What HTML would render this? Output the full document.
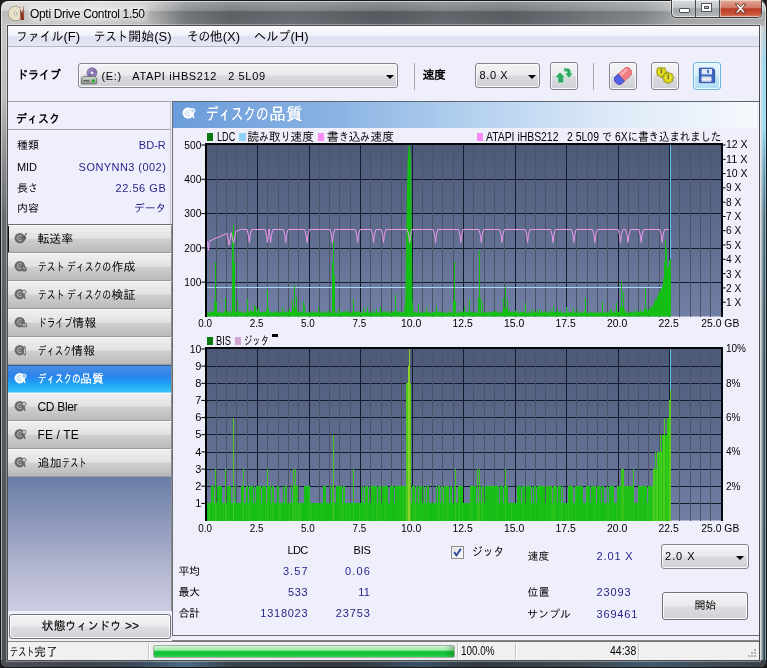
<!DOCTYPE html>
<html lang="ja"><head><meta charset="utf-8"><title>Opti Drive Control 1.50</title>
<style>
html,body{margin:0;padding:0}
body{width:767px;height:668px;overflow:hidden;position:relative;background:#1c1c1c;font-family:"Liberation Sans","IPAGothic",sans-serif;font-size:12px;color:#000}
.abs{position:absolute}
.t{position:absolute;white-space:nowrap;color:#000}
.t.b{font-weight:bold}
.kw{display:inline-block;white-space:nowrap;vertical-align:top}
.kw>span{display:inline-block;transform-origin:0 50%}
.t.v{color:#26268a}
.t.white{color:#fff;text-shadow:0 0 .7px rgba(255,255,255,.8)}
.t.title{text-shadow:0 0 5px #fff,0 0 5px #fff,0 0 8px #fff,0 0 10px #fff}
#frame{left:0;top:0;width:767px;height:668px;box-sizing:border-box;border:1px solid #16181a;border-radius:8px 8px 7px 7px;
background:
 linear-gradient(to bottom,rgba(255,255,255,.30) 0,rgba(255,255,255,.16) 9px,rgba(0,0,0,.10) 11px,rgba(0,0,0,.04) 25px,rgba(0,0,0,0) 26px) 0 0/100% 26px no-repeat,
 linear-gradient(90deg,#cfcfcf 0,#d6d6d6 12%,#c4c4c4 19%,#7e8286 24%,#666a70 30%,#70747a 38%,#5e6268 50%,#6c7076 58%,#62666c 66%,#74787e 74%,#8e9296 84%,#aeb0b2 88%,#b8babc 100%) 0 0/100% 26px no-repeat,
 linear-gradient(to bottom,#c0c0c0 0,#a8aaac 60px,#7c8084 160px,#5c6268 340px,#474d53 100%);
box-shadow:inset 0 0 0 1px rgba(255,255,255,.55)}
#client{left:8px;top:26px;width:751px;height:634px;background:#efeffb;box-shadow:0 0 0 1px #4a4c50,0 0 0 2px rgba(255,255,255,.35)}
#menu{left:8px;top:26px;width:751px;height:20px;background:linear-gradient(#fdfdff,#f1f1fb 45%,#dfe1f1 55%,#e4e6f4);border-bottom:1px solid #b6b8c8}
#tbline{left:8px;top:101px;width:163px;height:1px;background:#a4a4ac}
.combo{position:absolute;border:1px solid #85858f;border-radius:3px;background:linear-gradient(#f4f4f6,#eaeaee 48%,#dadae0 52%,#cfcfd7);box-sizing:border-box;box-shadow:inset 0 0 0 1px #fafafc}
.arr{position:absolute;width:0;height:0;border-left:4px solid transparent;border-right:4px solid transparent;border-top:4px solid #000}
.tbtn{position:absolute;top:62px;width:28px;height:28px;box-sizing:border-box;border:1px solid #85858f;border-radius:3px;background:linear-gradient(#f4f4f6,#eaeaee 48%,#dadae0 52%,#cfcfd7);box-shadow:inset 0 0 0 1px #fafafc}
.tbtn.hot{border-color:#6cb4e2;background:linear-gradient(#e6f5fd,#d4edfa 48%,#bfe4f8 52%,#b4def4);box-shadow:inset 0 0 0 1px #eefaff}
.tbtn svg{position:absolute;left:4px;top:4px}
.sep{position:absolute;top:63px;width:1px;height:27px;background:#a8a8b0}
.nav{position:absolute;left:8px;width:163px;height:26px;border-top:1px solid #f8f8f8;border-bottom:1px solid #9a9a9a;border-right:1px solid #8a8a8a;background:linear-gradient(#efefef,#e2e2e2 46%,#cfcfcf 52%,#b9b9b9)}
.nav .ico{position:absolute;left:6px;top:6.4px}
.nav.sel{border-top-color:#2c5ca8;border-bottom-color:#8adcfa;background:linear-gradient(#4a8ee2,#2a84ec 40%,#1f9ff4 65%,#38c2fa)}
#lgrad{left:8px;top:477px;width:163px;height:134px;background:linear-gradient(#6a7da6,#8f9abc 35%,#b4b7d1 70%,#cdcde2);border-right:1px solid #8a8a8a}
#lborder{left:8px;top:224px;width:164px;height:1px;background:#6e6e6e}
#lsep{left:8px;top:129px;width:162px;height:1px;background:#a4a4ac}
#lright{left:170px;top:102px;width:1px;height:122px;background:#c8c8d0}
.btn{position:absolute;box-sizing:border-box;border:1px solid #707078;border-radius:3px;background:linear-gradient(#f4f4f6,#ebebee 48%,#dddde2 52%,#d0d0d6);box-shadow:inset 0 0 0 1px #fcfcfc}
#rpanel{left:172px;top:101px;width:587px;height:535px;border:1px solid #6c6c76;border-right:none;border-top-color:#5c6470;box-sizing:border-box;background:#efeffb}
#rhdr{left:173px;top:102px;width:584px;height:26px;background:linear-gradient(90deg,#6b9ddb 0,#86b0e2 25%,#b2cfee 50%,#dde9f8 75%,#f6f9fd 100%)}
#status{left:8px;top:641px;width:751px;height:19px;background:#f0f0f0;border-top:1px solid #fbfbfb;box-sizing:border-box}
#stline{left:172px;top:640px;width:587px;height:2px;background:linear-gradient(#8c8c8c,#6e6e6e)}
.sdiv{position:absolute;top:643px;width:1px;height:16px;background:#c4c4c4;box-shadow:1px 0 0 #fff}
#prog{left:153px;top:645px;width:302px;height:13px;box-sizing:border-box;border:1px solid #a8aca8;border-radius:2px;background:linear-gradient(90deg,rgba(0,0,0,0) 0,rgba(0,0,0,0) 97%,rgba(0,60,0,.28) 100%),linear-gradient(#d0f6d4,#a4eeb0 30%,#78e48c 42%,#1cc63e 50%,#14c238 75%,#34d452 100%)}
.lgsq{position:absolute;width:6.3px;height:7.8px}
#chk{left:451px;top:546px;width:13px;height:13px;box-sizing:border-box;border:1px solid #8e8f8f;background:linear-gradient(135deg,#dcdcdc,#fff);box-shadow:inset 0 0 0 1px #f4f4f4}
</style></head><body>
<div id="frame" class="abs"></div>
<div class="abs" style="left:1px;top:660px;width:765px;height:7px;border-radius:0 0 6px 6px;background:linear-gradient(90deg,#4a5056 0,#3c4248 10%,#3a4a5a 18%,#4e6c84 24%,#38424c 30%,#34383e 45%,#3a5064 55%,#32383e 62%,#3c4852 75%,#42586a 85%,#3a4046 100%)"></div>
<div class="abs" style="left:1px;top:26px;width:7px;height:634px;background:linear-gradient(to bottom,#c6c6c6 0,#bcbcbc 70px,#8e9092 130px,#6a6d70 190px,#5a5d60 300px,#4c5054 100%);box-shadow:inset 1px 0 0 rgba(255,255,255,.5)"></div>
<div class="abs" style="left:759px;top:26px;width:7px;height:634px;background:linear-gradient(to bottom,#c6cace 0,#b4ccd8 16px,#94d6f0 34px,#96dcf6 100px,#6ca6c0 135px,#4a6e7e 190px,#3c505a 300px,#34444c 100%);box-shadow:inset -1px 0 0 rgba(190,235,250,.55)"><div style="position:absolute;left:0;top:0;width:7px;height:634px;background:linear-gradient(90deg,rgba(60,60,66,.9) 0,rgba(60,60,66,.9) 1px,rgba(225,228,232,.85) 1.5px,rgba(220,225,230,.5) 3.5px,rgba(220,225,230,0) 5px)"></div></div>
<div id="client" class="abs"></div>
<div id="menu" class="abs"></div>
<div id="tbline" class="abs"></div>
<!-- caption buttons -->
<div class="abs" style="left:671px;top:0;width:91px;height:18px;border:1px solid #3a3c3e;border-top:none;border-radius:0 0 5px 5px;box-sizing:border-box;background:linear-gradient(#dcdee0,#c2c5c8 45%,#a2a6aa 52%,#b4b8bb);overflow:hidden;box-shadow:0 0 0 1px rgba(255,255,255,.35)">
 <div class="abs" style="left:0;top:0;width:89px;height:17px;box-shadow:inset 0 0 0 1px rgba(255,255,255,.6);border-radius:0 0 4px 4px"></div>
 <div class="abs" style="left:23px;top:0;width:1px;height:17px;background:#4a4c50"></div>
 <div class="abs" style="left:47px;top:0;width:1px;height:17px;background:#4a4c50"></div>
 <div class="abs" style="left:48px;top:0;width:42px;height:17px;background:linear-gradient(#e4ab9c,#d27a66 45%,#bd3a22 52%,#c9583f 85%,#d98a6c);box-shadow:inset 0 0 0 1px rgba(255,255,255,.45)"></div>
 <div class="abs" style="left:7px;top:8px;width:9px;height:3px;background:#fff;border:1px solid #50545a;border-radius:1px"></div>
 <div class="abs" style="left:30px;top:4px;width:5px;height:3px;border:2px solid #fff;outline:1px solid #50545a;box-shadow:inset 0 0 0 1px #50545a"></div>
 <svg class="abs" style="left:62px;top:3px" width="13" height="11" viewBox="0 0 13 11"><path d="M1.2 1 L4 1 L6.5 3.8 L9 1 L11.8 1 L8.2 5.4 L11.8 10 L9 10 L6.5 7 L4 10 L1.2 10 L4.8 5.4 Z" fill="#fff" stroke="#5a2a22" stroke-width=".9" stroke-linejoin="round"/></svg>
</div>
<!-- app icon -->
<svg class="abs" style="left:8px;top:5px" width="18" height="17" viewBox="0 0 18 17"><circle cx="7.5" cy="8.5" r="7.3" fill="#e6e0c4" stroke="#9a9484" stroke-width=".8"/><circle cx="7.5" cy="8.5" r="2" fill="#b0b0b0"/><circle cx="7.5" cy="8.5" r=".9" fill="#fff"/><path d="M12 3 L15.5 1 L16 15 L12.5 15 Z" fill="#8c3020"/><path d="M12 3 L15.5 1 L14 8 Z" fill="#e8e8e8"/></svg>

<!-- toolbar -->
<div class="combo" style="left:78px;top:63px;width:320px;height:25px"><div class="arr" style="left:307px;top:11px"></div>
<svg class="abs" style="left:2px;top:3px" width="18" height="18" viewBox="0 0 18 18"><defs><linearGradient id="dg" x1="0" y1="0" x2="1" y2="1"><stop offset="0" stop-color="#b8a8d8"/><stop offset=".5" stop-color="#7a68a8"/><stop offset="1" stop-color="#a898c8"/></linearGradient><linearGradient id="bx" x1="0" y1="0" x2="0" y2="1"><stop offset="0" stop-color="#d4dad4"/><stop offset="1" stop-color="#8e988e"/></linearGradient></defs><circle cx="11" cy="5.8" r="5" fill="url(#dg)" stroke="#5c4c88" stroke-width=".6"/><circle cx="11" cy="5.8" r="1.4" fill="#f4f4f8"/><path d="M2.6 9.4 H13.6 L15.7 11.4 V16.2 Q15.7 16.8 15 16.8 H1.1 Q.4 16.8 .4 16.2 V11.4 Z" fill="url(#bx)" stroke="#59615a" stroke-width=".8"/><rect x="2.4" y="13.2" width="6" height="1.3" fill="#4c544c"/><rect x="11" y="12.4" width="3" height="2.8" fill="#2fae2f"/></svg></div>
<div class="sep" style="left:414px"></div>
<div class="combo" style="left:475px;top:63px;width:65px;height:25px"><div class="arr" style="left:52px;top:11px"></div></div>
<div class="tbtn" style="left:550px"><svg width="18" height="18" viewBox="0 0 18 18"><g stroke="#c8f0d8" stroke-width="1.6" stroke-linejoin="round" fill="#2fa862"><path d="M5 5.6 L9.6 10.2 L8.2 10.2 L8.2 15.6 L3.2 15.6 L3.2 10.2 L0.6 10.2 Z"/><path d="M9.2 1.6 L12.6 1.6 Q15.4 1.8 15.4 4.8 L15.4 6.4 L17.4 6.4 L14 10.8 L10.2 6.4 L12.4 6.4 L12.4 5 Q12.3 4.2 11.4 4.2 L9.2 4.2 Z"/></g><g fill="#2fa862"><path d="M5 5.6 L9.6 10.2 L8.2 10.2 L8.2 15.6 L3.2 15.6 L3.2 10.2 L0.6 10.2 Z"/><path d="M9.2 1.6 L12.6 1.6 Q15.4 1.8 15.4 4.8 L15.4 6.4 L17.4 6.4 L14 10.8 L10.2 6.4 L12.4 6.4 L12.4 5 Q12.3 4.2 11.4 4.2 L9.2 4.2 Z"/></g></svg></div>
<div class="sep" style="left:593px"></div>
<div class="tbtn" style="left:609px"><svg width="18" height="18" viewBox="0 0 18 18"><g transform="rotate(-42 9.2 8.9)"><rect x="-0.6" y="4.2" width="19.6" height="9.4" rx="3.6" fill="#f07e84" stroke="#c85a62" stroke-width=".7"/><path d="M3 4.2 H6.6 V13.6 H3 A3.6 3.6 0 0 1 -0.6 10 V7.8 A3.6 3.6 0 0 1 3 4.2Z" fill="#5262e6" stroke="#3440b0" stroke-width=".7"/><rect x="7.4" y="5.2" width="9.6" height="2.6" rx="1.3" fill="#f8a8ac"/></g></svg></div>
<div class="tbtn" style="left:651px"><svg width="18" height="18" viewBox="0 0 18 18"><polygon points="10.67,4.31 10.67,5.49 9.34,6.07 8.99,6.93 9.51,8.28 8.68,9.11 7.33,8.59 6.47,8.94 5.89,10.27 4.71,10.27 4.13,8.94 3.27,8.59 1.92,9.11 1.09,8.28 1.61,6.93 1.26,6.07 -0.07,5.49 -0.07,4.31 1.26,3.73 1.61,2.87 1.09,1.52 1.92,0.69 3.27,1.21 4.13,0.86 4.71,-0.47 5.89,-0.47 6.47,0.86 7.33,1.21 8.68,0.69 9.51,1.52 8.99,2.87 9.34,3.73" fill="#e6de1e" stroke="#86860a" stroke-width=".9" stroke-linejoin="round"/><polygon points="17.87,10.17 17.87,11.43 16.47,12.04 16.10,12.94 16.65,14.36 15.76,15.25 14.34,14.70 13.44,15.07 12.83,16.47 11.57,16.47 10.96,15.07 10.06,14.70 8.64,15.25 7.75,14.36 8.30,12.94 7.93,12.04 6.53,11.43 6.53,10.17 7.93,9.56 8.30,8.66 7.75,7.24 8.64,6.35 10.06,6.90 10.96,6.53 11.57,5.13 12.83,5.13 13.44,6.53 14.34,6.90 15.76,6.35 16.65,7.24 16.10,8.66 16.47,9.56" fill="#e6de1e" stroke="#86860a" stroke-width=".9" stroke-linejoin="round"/><rect x="4.6" y="1.4" width="1.5" height="5.2" fill="#7a7a40"/><rect x="11.5" y="7.2" width="1.5" height="5.2" fill="#7a7a40"/></svg></div>
<div class="tbtn hot" style="left:693px"><svg width="18" height="18" viewBox="0 0 18 18"><path d="M1.4 1.2 H14.8 L16.6 3 V15.6 H1.4 Z" fill="#3b66c6" stroke="#2a4a9c" stroke-width=".9" stroke-linejoin="round"/><rect x="3.6" y="2" width="10.4" height="5.4" fill="#dfe7f3"/><rect x="9.2" y="2.8" width="1.8" height="3.4" fill="#3b66c6"/><rect x="3.6" y="9.4" width="9.8" height="5.4" fill="#d6dae2"/><rect x="3.6" y="11.4" width="9.8" height="1.4" fill="#f6f6f8"/></svg></div>

<!-- left panel -->
<div id="lsep" class="abs"></div>
<div id="lright" class="abs"></div>
<div id="lborder" class="abs"></div>
<div class="nav" style="top:225px;box-shadow:inset 1px 0 0 #111"><svg class="ico" width="14" height="12.25" viewBox="0 0 16 14"><circle cx="6.6" cy="7" r="6" fill="#6a6a6a"/><path d="M8.8 5 A2.9 2.9 0 1 0 8.8 9" fill="none" stroke="#d4d4d4" stroke-width=".85"/><circle cx="6.6" cy="7" r=".8" fill="#d4d4d4"/><path d="M13.6 1.2 L10.2 7.4 L12.2 7.4 L9.8 13 L14.4 5.8 L12.4 5.8 L15 1.2 Z" fill="#4a4a4a"/></svg></div>
<div class="nav" style="top:253px"><svg class="ico" width="14" height="12.25" viewBox="0 0 16 14"><circle cx="6.6" cy="7" r="6" fill="#6a6a6a"/><path d="M8.8 5 A2.9 2.9 0 1 0 8.8 9" fill="none" stroke="#d4d4d4" stroke-width=".85"/><circle cx="6.6" cy="7" r=".8" fill="#d4d4d4"/><circle cx="11.8" cy="10.2" r="3" fill="#6a6a6a"/><path d="M10.5 8.2 L12 10.4 L13.6 8.6" stroke="#d4d4d4" stroke-width=".9" fill="none"/></svg></div>
<div class="nav" style="top:281px"><svg class="ico" width="14" height="12.25" viewBox="0 0 16 14"><circle cx="6.6" cy="7" r="6" fill="#6a6a6a"/><path d="M8.8 5 A2.9 2.9 0 1 0 8.8 9" fill="none" stroke="#d4d4d4" stroke-width=".85"/><circle cx="6.6" cy="7" r=".8" fill="#d4d4d4"/><circle cx="11.6" cy="4.6" r="2.3" fill="#d4d4d4" stroke="#6a6a6a" stroke-width="1"/><path d="M11 7 L12.6 12.6" stroke="#6a6a6a" stroke-width="1.6"/></svg></div>
<div class="nav" style="top:309px"><svg class="ico" width="14" height="12.25" viewBox="0 0 16 14"><circle cx="6.6" cy="7" r="6" fill="#6a6a6a"/><path d="M8.8 5 A2.9 2.9 0 1 0 8.8 9" fill="none" stroke="#d4d4d4" stroke-width=".85"/><circle cx="6.6" cy="7" r=".8" fill="#d4d4d4"/><rect x="8.4" y="8.2" width="6.6" height="4.6" rx="1" fill="#6a6a6a"/><rect x="9.6" y="9.4" width="4.4" height="1" fill="#d4d4d4"/><rect x="9.6" y="11" width="4.4" height=".8" fill="#d4d4d4"/></svg></div>
<div class="nav" style="top:337px"><svg class="ico" width="14" height="12.25" viewBox="0 0 16 14"><circle cx="6.6" cy="7" r="6" fill="#6a6a6a"/><path d="M8.8 5 A2.9 2.9 0 1 0 8.8 9" fill="none" stroke="#d4d4d4" stroke-width=".85"/><circle cx="6.6" cy="7" r=".8" fill="#d4d4d4"/><rect x="10.8" y="4" width="2.6" height="9" fill="#6a6a6a"/><rect x="11.6" y="2.2" width="1.4" height="1.4" fill="#6a6a6a"/><rect x="11.6" y="5.4" width="1" height="6" fill="#d4d4d4"/></svg></div>
<div class="nav sel" style="top:365px"><svg class="ico" width="14" height="12.25" viewBox="0 0 16 14"><circle cx="6.6" cy="7" r="6" fill="#ffffff"/><path d="M8.8 5 A2.9 2.9 0 1 0 8.8 9" fill="none" stroke="#7ab8f0" stroke-width=".85"/><circle cx="6.6" cy="7" r=".8" fill="#7ab8f0"/><circle cx="11.6" cy="4.6" r="2.3" fill="#7ab8f0" stroke="#ffffff" stroke-width="1"/><path d="M11 7 L12.6 12.6" stroke="#ffffff" stroke-width="1.6"/></svg></div>
<div class="nav" style="top:393px"><svg class="ico" width="14" height="12.25" viewBox="0 0 16 14"><circle cx="6.6" cy="7" r="6" fill="#6a6a6a"/><path d="M8.8 5 A2.9 2.9 0 1 0 8.8 9" fill="none" stroke="#d4d4d4" stroke-width=".85"/><circle cx="6.6" cy="7" r=".8" fill="#d4d4d4"/><circle cx="11.6" cy="4.6" r="2.3" fill="#d4d4d4" stroke="#6a6a6a" stroke-width="1"/><path d="M11 7 L12.6 12.6" stroke="#6a6a6a" stroke-width="1.6"/></svg></div>
<div class="nav" style="top:421px"><svg class="ico" width="14" height="12.25" viewBox="0 0 16 14"><circle cx="6.6" cy="7" r="6" fill="#6a6a6a"/><path d="M8.8 5 A2.9 2.9 0 1 0 8.8 9" fill="none" stroke="#d4d4d4" stroke-width=".85"/><circle cx="6.6" cy="7" r=".8" fill="#d4d4d4"/><circle cx="11.6" cy="4.6" r="2.3" fill="#d4d4d4" stroke="#6a6a6a" stroke-width="1"/><path d="M11 7 L12.6 12.6" stroke="#6a6a6a" stroke-width="1.6"/></svg></div>
<div class="nav" style="top:449px"><svg class="ico" width="14" height="12.25" viewBox="0 0 16 14"><circle cx="6.6" cy="7" r="6" fill="#6a6a6a"/><path d="M8.8 5 A2.9 2.9 0 1 0 8.8 9" fill="none" stroke="#d4d4d4" stroke-width=".85"/><circle cx="6.6" cy="7" r=".8" fill="#d4d4d4"/><circle cx="11.6" cy="4.6" r="2.3" fill="#d4d4d4" stroke="#6a6a6a" stroke-width="1"/><path d="M11 7 L12.6 12.6" stroke="#6a6a6a" stroke-width="1.6"/></svg></div>

<div id="lgrad" class="abs"></div>
<div class="btn" style="left:9px;top:614px;width:162px;height:25px"></div>

<!-- right panel -->
<div id="rpanel" class="abs"></div>
<div id="rhdr" class="abs"></div>
<svg class="abs" style="left:182px;top:105.5px" width="15" height="14" viewBox="0 0 16 14"><circle cx="6.6" cy="7" r="6" fill="#fff"/><path d="M9 4.6 A3.2 3.2 0 1 0 9 9.4" fill="none" stroke="#9cc0e8" stroke-width=".8"/><circle cx="6.6" cy="7" r=".9" fill="#9cc0e8"/><circle cx="11.6" cy="4.6" r="2.3" fill="#c4daf2" stroke="#fff" stroke-width="1"/><path d="M11 7 L12.6 12.6" stroke="#fff" stroke-width="1.6"/></svg>
<div class="lgsq" style="left:207px;top:133px;background:#0a7a10"></div>
<div class="lgsq" style="left:239.3px;top:133px;background:#8fd2f6"></div>
<div class="lgsq" style="left:317.6px;top:133px;background:#f58df5"></div>
<div class="lgsq" style="left:477px;top:133px;background:#f58df5"></div>
<div class="lgsq" style="left:206.6px;top:337px;background:#0a7a10"></div>
<div class="lgsq" style="left:234.6px;top:337px;background:#d4a4d4"></div>
<div class="abs" style="left:272px;top:334px;width:6px;height:3px;background:#000"></div>
<svg class="abs" style="left:0;top:0;will-change:transform" width="767" height="668" viewBox="0 0 767 668" font-family="'Liberation Sans',sans-serif" font-size="11">
<defs>
<linearGradient id="pbg" x1="0" y1="0" x2="0" y2="1"><stop offset="0" stop-color="#4c5976"/><stop offset="1" stop-color="#717fa5"/></linearGradient>
</defs>
<rect x="206.0" y="145.0" width="515.00" height="171.5" fill="url(#pbg)"/>
<g shape-rendering="crispEdges">
<rect x="206.0" y="179" width="515.00" height="1" fill="#141b2c"/>
<rect x="206.0" y="213" width="515.00" height="1" fill="#141b2c"/>
<rect x="206.0" y="248" width="515.00" height="1" fill="#141b2c"/>
<rect x="206.0" y="282" width="515.00" height="1" fill="#141b2c"/>
<rect x="216" y="145.0" width="1" height="171.50" fill="#4b5366"/>
<rect x="226" y="145.0" width="1" height="171.50" fill="#4b5366"/>
<rect x="236" y="145.0" width="1" height="171.50" fill="#4b5366"/>
<rect x="247" y="145.0" width="1" height="171.50" fill="#4b5366"/>
<rect x="257" y="145.0" width="1" height="171.50" fill="#141b2c"/>
<rect x="267" y="145.0" width="1" height="171.50" fill="#4b5366"/>
<rect x="278" y="145.0" width="1" height="171.50" fill="#4b5366"/>
<rect x="288" y="145.0" width="1" height="171.50" fill="#4b5366"/>
<rect x="298" y="145.0" width="1" height="171.50" fill="#4b5366"/>
<rect x="309" y="145.0" width="1" height="171.50" fill="#141b2c"/>
<rect x="319" y="145.0" width="1" height="171.50" fill="#4b5366"/>
<rect x="329" y="145.0" width="1" height="171.50" fill="#4b5366"/>
<rect x="339" y="145.0" width="1" height="171.50" fill="#4b5366"/>
<rect x="350" y="145.0" width="1" height="171.50" fill="#4b5366"/>
<rect x="360" y="145.0" width="1" height="171.50" fill="#141b2c"/>
<rect x="370" y="145.0" width="1" height="171.50" fill="#4b5366"/>
<rect x="381" y="145.0" width="1" height="171.50" fill="#4b5366"/>
<rect x="391" y="145.0" width="1" height="171.50" fill="#4b5366"/>
<rect x="401" y="145.0" width="1" height="171.50" fill="#4b5366"/>
<rect x="412" y="145.0" width="1" height="171.50" fill="#141b2c"/>
<rect x="422" y="145.0" width="1" height="171.50" fill="#4b5366"/>
<rect x="432" y="145.0" width="1" height="171.50" fill="#4b5366"/>
<rect x="442" y="145.0" width="1" height="171.50" fill="#4b5366"/>
<rect x="453" y="145.0" width="1" height="171.50" fill="#4b5366"/>
<rect x="463" y="145.0" width="1" height="171.50" fill="#141b2c"/>
<rect x="473" y="145.0" width="1" height="171.50" fill="#4b5366"/>
<rect x="484" y="145.0" width="1" height="171.50" fill="#4b5366"/>
<rect x="494" y="145.0" width="1" height="171.50" fill="#4b5366"/>
<rect x="504" y="145.0" width="1" height="171.50" fill="#4b5366"/>
<rect x="515" y="145.0" width="1" height="171.50" fill="#141b2c"/>
<rect x="525" y="145.0" width="1" height="171.50" fill="#4b5366"/>
<rect x="535" y="145.0" width="1" height="171.50" fill="#4b5366"/>
<rect x="545" y="145.0" width="1" height="171.50" fill="#4b5366"/>
<rect x="556" y="145.0" width="1" height="171.50" fill="#4b5366"/>
<rect x="566" y="145.0" width="1" height="171.50" fill="#141b2c"/>
<rect x="576" y="145.0" width="1" height="171.50" fill="#4b5366"/>
<rect x="587" y="145.0" width="1" height="171.50" fill="#4b5366"/>
<rect x="597" y="145.0" width="1" height="171.50" fill="#4b5366"/>
<rect x="607" y="145.0" width="1" height="171.50" fill="#4b5366"/>
<rect x="618" y="145.0" width="1" height="171.50" fill="#141b2c"/>
<rect x="628" y="145.0" width="1" height="171.50" fill="#4b5366"/>
<rect x="638" y="145.0" width="1" height="171.50" fill="#4b5366"/>
<rect x="648" y="145.0" width="1" height="171.50" fill="#4b5366"/>
<rect x="659" y="145.0" width="1" height="171.50" fill="#4b5366"/>
<rect x="669" y="145.0" width="1" height="171.50" fill="#141b2c"/>
<rect x="679" y="145.0" width="1" height="171.50" fill="#4b5366"/>
<rect x="690" y="145.0" width="1" height="171.50" fill="#4b5366"/>
<rect x="700" y="145.0" width="1" height="171.50" fill="#4b5366"/>
<rect x="710" y="145.0" width="1" height="171.50" fill="#4b5366"/>
<rect x="205" y="143" width="2" height="173.50" fill="#000"/>
<rect x="205" y="143" width="518" height="2" fill="#05070c"/>
<rect x="721" y="143" width="2" height="173.50" fill="#05070c"/>
</g>
<rect x="207.0" y="287" width="463.3" height="1" fill="#a4d6f2" shape-rendering="crispEdges"/>
<polygon points="207,316.5 207,312.4 208,312.4 208,312.4 209,312.4 209,312.8 210,312.8 210,310.9 211,310.9 211,311.8 212,311.8 212,311.5 213,311.5 213,312.1 214,312.1 214,301.4 215,301.4 215,262.6 216,262.6 216,301.4 217,301.4 217,312.3 218,312.3 218,312.7 219,312.7 219,311.8 220,311.8 220,312.7 221,312.7 221,311.9 222,311.9 222,312.5 223,312.5 223,313.1 224,313.1 224,311.2 225,311.2 225,297.6 226,297.6 226,311.2 227,311.2 227,311.1 228,311.1 228,313.0 229,313.0 229,312.2 230,312.2 230,309.9 231,309.9 231,312.4 232,312.4 232,232.0 233,232.0 233,224.9 234,224.9 234,262.0 235,262.0 235,311.5 236,311.5 236,311.6 237,311.6 237,299.0 238,299.0 238,311.6 239,311.6 239,311.6 240,311.6 240,311.7 241,311.7 241,311.6 242,311.6 242,312.8 243,312.8 243,312.8 244,312.8 244,312.1 245,312.1 245,313.0 246,313.0 246,311.6 247,311.6 247,299.0 248,299.0 248,311.2 249,311.2 249,311.7 250,311.7 250,309.5 251,309.5 251,311.8 252,311.8 252,311.0 253,311.0 253,311.5 254,311.5 254,304.8 255,304.8 255,306.9 256,306.9 256,312.3 257,312.3 257,309.8 258,309.8 258,307.0 259,307.0 259,311.8 260,311.8 260,312.0 261,312.0 261,312.4 262,312.4 262,312.2 263,312.2 263,312.2 264,312.2 264,312.1 265,312.1 265,311.9 266,311.9 266,309.0 267,309.0 267,289.6 268,289.6 268,309.0 269,309.0 269,312.3 270,312.3 270,311.7 271,311.7 271,312.8 272,312.8 272,312.0 273,312.0 273,312.6 274,312.6 274,312.4 275,312.4 275,311.7 276,311.7 276,311.0 277,311.0 277,311.7 278,311.7 278,312.7 279,312.7 279,312.7 280,312.7 280,312.1 281,312.1 281,311.8 282,311.8 282,307.0 283,307.0 283,312.0 284,312.0 284,311.4 285,311.4 285,313.1 286,313.1 286,310.9 287,310.9 287,312.1 288,312.1 288,311.6 289,311.6 289,308.6 290,308.6 290,312.0 291,312.0 291,311.9 292,311.9 292,300.0 293,300.0 293,307.8 294,307.8 294,285.5 295,285.5 295,307.8 296,307.8 296,297.0 297,297.0 297,311.0 298,311.0 298,312.1 299,312.1 299,311.8 300,311.8 300,312.8 301,312.8 301,311.5 302,311.5 302,312.4 303,312.4 303,301.7 304,301.7 304,305.4 305,305.4 305,313.0 306,313.0 306,312.6 307,312.6 307,312.9 308,312.9 308,311.8 309,311.8 309,312.3 310,312.3 310,312.7 311,312.7 311,311.9 312,311.9 312,311.8 313,311.8 313,312.5 314,312.5 314,312.8 315,312.8 315,312.3 316,312.3 316,312.2 317,312.2 317,313.1 318,313.1 318,307.0 319,307.0 319,312.3 320,312.3 320,312.2 321,312.2 321,311.6 322,311.6 322,312.9 323,312.9 323,311.7 324,311.7 324,312.8 325,312.8 325,311.3 326,311.3 326,312.7 327,312.7 327,312.5 328,312.5 328,310.3 329,310.3 329,312.8 330,312.8 330,312.5 331,312.5 331,312.8 332,312.8 332,262.0 333,262.0 333,241.0 334,241.0 334,275.0 335,275.0 335,312.6 336,312.6 336,312.8 337,312.8 337,312.9 338,312.9 338,310.0 339,310.0 339,310.5 340,310.5 340,313.1 341,313.1 341,311.6 342,311.6 342,312.3 343,312.3 343,312.0 344,312.0 344,311.2 345,311.2 345,311.6 346,311.6 346,311.8 347,311.8 347,309.9 348,309.9 348,311.9 349,311.9 349,312.3 350,312.3 350,313.1 351,313.1 351,312.8 352,312.8 352,311.6 353,311.6 353,299.0 354,299.0 354,311.6 355,311.6 355,312.5 356,312.5 356,311.5 357,311.5 357,311.6 358,311.6 358,311.8 359,311.8 359,311.7 360,311.7 360,311.9 361,311.9 361,313.0 362,313.0 362,313.1 363,313.1 363,308.0 364,308.0 364,312.0 365,312.0 365,312.2 366,312.2 366,311.5 367,311.5 367,307.0 368,307.0 368,311.9 369,311.9 369,313.0 370,313.0 370,312.9 371,312.9 371,312.2 372,312.2 372,312.2 373,312.2 373,309.9 374,309.9 374,313.0 375,313.0 375,312.3 376,312.3 376,309.1 377,309.1 377,312.3 378,312.3 378,312.6 379,312.6 379,312.6 380,312.6 380,307.0 381,307.0 381,312.8 382,312.8 382,311.7 383,311.7 383,311.5 384,311.5 384,311.7 385,311.7 385,311.5 386,311.5 386,311.6 387,311.6 387,311.5 388,311.5 388,312.9 389,312.9 389,311.1 390,311.1 390,312.4 391,312.4 391,312.7 392,312.7 392,311.9 393,311.9 393,311.6 394,311.6 394,310.5 395,310.5 395,295.0 396,295.0 396,310.5 397,310.5 397,312.1 398,312.1 398,312.7 399,312.7 399,311.5 400,311.5 400,312.4 401,312.4 401,312.0 402,312.0 402,312.2 403,312.2 403,312.3 404,312.3 404,311.9 405,311.9 405,312.9 406,312.9 406,311.9 407,311.9 407,312.7 408,312.7 408,312.1 409,312.1 409,312.2 410,312.2 410,312.4 411,312.4 411,311.4 412,311.4 412,312.3 413,312.3 413,311.2 414,311.2 414,313.0 415,313.0 415,312.0 416,312.0 416,312.5 417,312.5 417,312.9 418,312.9 418,304.0 419,304.0 419,312.4 420,312.4 420,312.6 421,312.6 421,311.7 422,311.7 422,312.5 423,312.5 423,312.5 424,312.5 424,311.8 425,311.8 425,312.2 426,312.2 426,307.6 427,307.6 427,312.2 428,312.2 428,312.1 429,312.1 429,312.2 430,312.2 430,313.0 431,313.0 431,313.0 432,313.0 432,311.9 433,311.9 433,312.7 434,312.7 434,311.9 435,311.9 435,311.6 436,311.6 436,306.0 437,306.0 437,311.6 438,311.6 438,312.0 439,312.0 439,311.8 440,311.8 440,312.1 441,312.1 441,311.8 442,311.8 442,312.9 443,312.9 443,312.5 444,312.5 444,312.4 445,312.4 445,313.0 446,313.0 446,312.1 447,312.1 447,313.0 448,313.0 448,311.3 449,311.3 449,312.8 450,312.8 450,312.1 451,312.1 451,312.7 452,312.7 452,312.6 453,312.6 453,301.0 454,301.0 454,261.3 455,261.3 455,301.0 456,301.0 456,313.0 457,313.0 457,312.5 458,312.5 458,312.7 459,312.7 459,311.2 460,311.2 460,311.8 461,311.8 461,311.8 462,311.8 462,311.7 463,311.7 463,311.5 464,311.5 464,306.3 465,306.3 465,311.7 466,311.7 466,312.7 467,312.7 467,312.3 468,312.3 468,311.6 469,311.6 469,299.0 470,299.0 470,311.6 471,311.6 471,312.2 472,312.2 472,311.8 473,311.8 473,313.0 474,313.0 474,312.0 475,312.0 475,312.9 476,312.9 476,311.6 477,311.6 477,313.1 478,313.1 478,298.0 479,298.0 479,250.5 480,250.5 480,298.0 481,298.0 481,312.4 482,312.4 482,302.0 483,302.0 483,312.4 484,312.4 484,312.6 485,312.6 485,311.9 486,311.9 486,312.7 487,312.7 487,312.0 488,312.0 488,311.8 489,311.8 489,312.3 490,312.3 490,313.0 491,313.0 491,312.3 492,312.3 492,311.8 493,311.8 493,311.2 494,311.2 494,311.5 495,311.5 495,311.1 496,311.1 496,310.9 497,310.9 497,311.8 498,311.8 498,312.8 499,312.8 499,312.2 500,312.2 500,312.9 501,312.9 501,312.3 502,312.3 502,311.3 503,311.3 503,298.0 504,298.0 504,308.2 505,308.2 505,286.9 506,286.9 506,308.2 507,308.2 507,300.0 508,300.0 508,311.6 509,311.6 509,309.5 510,309.5 510,311.7 511,311.7 511,311.8 512,311.8 512,312.4 513,312.4 513,311.6 514,311.6 514,312.0 515,312.0 515,310.6 516,310.6 516,311.1 517,311.1 517,312.8 518,312.8 518,312.2 519,312.2 519,313.0 520,313.0 520,311.6 521,311.6 521,312.4 522,312.4 522,311.9 523,311.9 523,311.5 524,311.5 524,312.4 525,312.4 525,303.0 526,303.0 526,312.4 527,312.4 527,313.0 528,313.0 528,311.9 529,311.9 529,312.6 530,312.6 530,312.9 531,312.9 531,310.2 532,310.2 532,312.7 533,312.7 533,309.8 534,309.8 534,312.0 535,312.0 535,311.8 536,311.8 536,312.2 537,312.2 537,310.1 538,310.1 538,313.1 539,313.1 539,309.7 540,309.7 540,312.5 541,312.5 541,310.2 542,310.2 542,312.3 543,312.3 543,312.3 544,312.3 544,311.6 545,311.6 545,311.8 546,311.8 546,312.8 547,312.8 547,312.8 548,312.8 548,311.4 549,311.4 549,312.6 550,312.6 550,309.7 551,309.7 551,311.7 552,311.7 552,312.0 553,312.0 553,306.0 554,306.0 554,312.5 555,312.5 555,312.2 556,312.2 556,311.6 557,311.6 557,308.9 558,308.9 558,312.3 559,312.3 559,312.1 560,312.1 560,310.9 561,310.9 561,312.7 562,312.7 562,312.8 563,312.8 563,313.0 564,313.0 564,312.5 565,312.5 565,312.8 566,312.8 566,307.0 567,307.0 567,312.3 568,312.3 568,312.0 569,312.0 569,312.8 570,312.8 570,312.1 571,312.1 571,311.9 572,311.9 572,312.7 573,312.7 573,307.4 574,307.4 574,312.0 575,312.0 575,312.8 576,312.8 576,312.4 577,312.4 577,308.9 578,308.9 578,312.2 579,312.2 579,312.9 580,312.9 580,312.6 581,312.6 581,312.7 582,312.7 582,311.8 583,311.8 583,312.8 584,312.8 584,310.5 585,310.5 585,297.6 586,297.6 586,311.2 587,311.2 587,312.9 588,312.9 588,313.0 589,313.0 589,312.9 590,312.9 590,312.3 591,312.3 591,311.9 592,311.9 592,312.7 593,312.7 593,312.4 594,312.4 594,312.6 595,312.6 595,313.0 596,313.0 596,313.0 597,313.0 597,311.7 598,311.7 598,312.4 599,312.4 599,312.5 600,312.5 600,312.5 601,312.5 601,312.4 602,312.4 602,301.7 603,301.7 603,311.5 604,311.5 604,312.8 605,312.8 605,312.0 606,312.0 606,313.1 607,313.1 607,312.5 608,312.5 608,312.7 609,312.7 609,311.6 610,311.6 610,309.4 611,309.4 611,309.7 612,309.7 612,311.9 613,311.9 613,312.5 614,312.5 614,310.4 615,310.4 615,312.4 616,312.4 616,303.0 617,303.0 617,311.4 618,311.4 618,312.0 619,312.0 619,311.7 620,311.7 620,306.7 621,306.7 621,281.5 622,281.5 622,306.7 623,306.7 623,292.0 624,292.0 624,309.6 625,309.6 625,311.7 626,311.7 626,313.0 627,313.0 627,313.0 628,313.0 628,312.3 629,312.3 629,312.5 630,312.5 630,312.0 631,312.0 631,312.6 632,312.6 632,312.2 633,312.2 633,310.7 634,310.7 634,313.0 635,313.0 635,312.3 636,312.3 636,309.8 637,309.8 637,311.7 638,311.7 638,312.0 639,312.0 639,312.1 640,312.1 640,309.7 641,309.7 641,311.9 642,311.9 642,311.7 643,311.7 643,311.3 644,311.3 644,308.6 645,308.6 645,288.2 646,288.2 646,308.6 647,308.6 647,311.0 648,311.0 648,310.3 649,310.3 649,307.9 650,307.9 650,307.0 651,307.0 651,308.2 652,308.2 652,306.5 653,306.5 653,304.1 654,304.1 654,301.8 655,301.8 655,299.1 656,299.1 656,299.4 657,299.4 657,296.0 658,296.0 658,294.3 659,294.3 659,290.8 660,290.8 660,290.8 661,290.8 661,288.0 662,288.0 662,285.4 663,285.4 663,279.0 664,279.0 664,262.0 665,262.0 665,240.0 666,240.0 666,248.0 667,248.0 667,268.3 668,268.3 668,265.9 669,265.9 669,260.0 670,260.0 670,257.9 671,257.9 671,316.5" fill="#14be14"/>
<polygon points="403.8,316.5 405.3,300 406,250 406.8,200 407.6,162 408.6,148 409.0,145 409.8,145 410.2,148 410.9,162 411.5,200 412,250 412.5,300 413.8,316.5" fill="#14be14"/>
<polyline fill="none" stroke="#ec98ec" stroke-width="1.0" stroke-linejoin="round" points="207.5,241.5 208.3,250.5 209.5,241.0 227.0,233.4 229.2,245.0 231.2,232.6 233.7,243.0 235.8,231.5 240.4,229.5 247.0,229.5 248.5,235.5 249.3,242.5 250.1,235.5 251.6,229.5 265.1,229.5 266.6,235.5 267.4,242.5 268.2,235.5 269.7,229.5 268.3,229.5 269.8,235.5 270.6,242.5 271.4,235.5 272.9,229.5 283.4,229.5 284.9,235.5 285.7,242.5 286.5,235.5 288.0,229.5 304.7,229.5 306.2,235.5 307.0,242.5 307.8,235.5 309.3,229.5 330.1,229.5 331.6,235.5 332.4,242.5 333.2,235.5 334.7,229.5 355.3,229.5 356.8,235.5 357.6,242.5 358.4,235.5 359.9,229.5 371.2,229.5 372.7,235.5 373.5,242.5 374.3,235.5 375.8,229.5 381.2,229.5 382.7,235.5 383.5,242.5 384.3,235.5 385.8,229.5 407.3,229.5 408.8,235.5 409.6,242.5 410.4,235.5 411.9,229.5 433.2,229.5 434.7,235.5 435.5,242.5 436.3,235.5 437.8,229.5 458.5,229.5 460.0,235.5 460.8,242.5 461.6,235.5 463.1,229.5 479.0,229.5 480.5,235.5 481.3,242.5 482.1,235.5 483.6,229.5 499.7,229.5 501.2,235.5 502.0,242.5 502.8,235.5 504.3,229.5 525.3,229.5 526.8,235.5 527.6,242.5 528.4,235.5 529.9,229.5 550.7,229.5 552.2,235.5 553.0,242.5 553.8,235.5 555.3,229.5 571.5,229.5 573.0,235.5 573.8,242.5 574.6,235.5 576.1,229.5 592.6,229.5 594.1,235.5 594.9,242.5 595.7,235.5 597.2,229.5 618.2,229.5 619.7,235.5 620.5,242.5 621.3,235.5 622.8,229.5 625.7,229.5 627.2,235.5 628.0,242.5 628.8,235.5 630.3,229.5 638.9,229.5 640.4,235.5 641.2,242.5 642.0,235.5 643.5,229.5 659.9,229.5 661.4,235.5 662.2,242.5 663.0,235.5 664.5,229.5 669.0,229.5"/>
<rect x="670" y="145.0" width="1" height="113.6" fill="#62c4ee" shape-rendering="crispEdges"/>
<rect x="206.0" y="349.0" width="515.00" height="171.50" fill="url(#pbg)"/>
<g shape-rendering="crispEdges">
<rect x="206.0" y="366" width="515.00" height="1" fill="#141b2c"/>
<rect x="206.0" y="383" width="515.00" height="1" fill="#141b2c"/>
<rect x="206.0" y="400" width="515.00" height="1" fill="#141b2c"/>
<rect x="206.0" y="417" width="515.00" height="1" fill="#141b2c"/>
<rect x="206.0" y="434" width="515.00" height="1" fill="#141b2c"/>
<rect x="206.0" y="452" width="515.00" height="1" fill="#141b2c"/>
<rect x="206.0" y="469" width="515.00" height="1" fill="#141b2c"/>
<rect x="206.0" y="486" width="515.00" height="1" fill="#141b2c"/>
<rect x="206.0" y="503" width="515.00" height="1" fill="#141b2c"/>
<rect x="216" y="349.0" width="1" height="171.50" fill="#4b5366"/>
<rect x="226" y="349.0" width="1" height="171.50" fill="#4b5366"/>
<rect x="236" y="349.0" width="1" height="171.50" fill="#4b5366"/>
<rect x="247" y="349.0" width="1" height="171.50" fill="#4b5366"/>
<rect x="257" y="349.0" width="1" height="171.50" fill="#141b2c"/>
<rect x="267" y="349.0" width="1" height="171.50" fill="#4b5366"/>
<rect x="278" y="349.0" width="1" height="171.50" fill="#4b5366"/>
<rect x="288" y="349.0" width="1" height="171.50" fill="#4b5366"/>
<rect x="298" y="349.0" width="1" height="171.50" fill="#4b5366"/>
<rect x="309" y="349.0" width="1" height="171.50" fill="#141b2c"/>
<rect x="319" y="349.0" width="1" height="171.50" fill="#4b5366"/>
<rect x="329" y="349.0" width="1" height="171.50" fill="#4b5366"/>
<rect x="339" y="349.0" width="1" height="171.50" fill="#4b5366"/>
<rect x="350" y="349.0" width="1" height="171.50" fill="#4b5366"/>
<rect x="360" y="349.0" width="1" height="171.50" fill="#141b2c"/>
<rect x="370" y="349.0" width="1" height="171.50" fill="#4b5366"/>
<rect x="381" y="349.0" width="1" height="171.50" fill="#4b5366"/>
<rect x="391" y="349.0" width="1" height="171.50" fill="#4b5366"/>
<rect x="401" y="349.0" width="1" height="171.50" fill="#4b5366"/>
<rect x="412" y="349.0" width="1" height="171.50" fill="#141b2c"/>
<rect x="422" y="349.0" width="1" height="171.50" fill="#4b5366"/>
<rect x="432" y="349.0" width="1" height="171.50" fill="#4b5366"/>
<rect x="442" y="349.0" width="1" height="171.50" fill="#4b5366"/>
<rect x="453" y="349.0" width="1" height="171.50" fill="#4b5366"/>
<rect x="463" y="349.0" width="1" height="171.50" fill="#141b2c"/>
<rect x="473" y="349.0" width="1" height="171.50" fill="#4b5366"/>
<rect x="484" y="349.0" width="1" height="171.50" fill="#4b5366"/>
<rect x="494" y="349.0" width="1" height="171.50" fill="#4b5366"/>
<rect x="504" y="349.0" width="1" height="171.50" fill="#4b5366"/>
<rect x="515" y="349.0" width="1" height="171.50" fill="#141b2c"/>
<rect x="525" y="349.0" width="1" height="171.50" fill="#4b5366"/>
<rect x="535" y="349.0" width="1" height="171.50" fill="#4b5366"/>
<rect x="545" y="349.0" width="1" height="171.50" fill="#4b5366"/>
<rect x="556" y="349.0" width="1" height="171.50" fill="#4b5366"/>
<rect x="566" y="349.0" width="1" height="171.50" fill="#141b2c"/>
<rect x="576" y="349.0" width="1" height="171.50" fill="#4b5366"/>
<rect x="587" y="349.0" width="1" height="171.50" fill="#4b5366"/>
<rect x="597" y="349.0" width="1" height="171.50" fill="#4b5366"/>
<rect x="607" y="349.0" width="1" height="171.50" fill="#4b5366"/>
<rect x="618" y="349.0" width="1" height="171.50" fill="#141b2c"/>
<rect x="628" y="349.0" width="1" height="171.50" fill="#4b5366"/>
<rect x="638" y="349.0" width="1" height="171.50" fill="#4b5366"/>
<rect x="648" y="349.0" width="1" height="171.50" fill="#4b5366"/>
<rect x="659" y="349.0" width="1" height="171.50" fill="#4b5366"/>
<rect x="669" y="349.0" width="1" height="171.50" fill="#141b2c"/>
<rect x="679" y="349.0" width="1" height="171.50" fill="#4b5366"/>
<rect x="690" y="349.0" width="1" height="171.50" fill="#4b5366"/>
<rect x="700" y="349.0" width="1" height="171.50" fill="#4b5366"/>
<rect x="710" y="349.0" width="1" height="171.50" fill="#4b5366"/>
<rect x="205" y="347" width="2" height="173.50" fill="#000"/>
<rect x="205" y="347" width="518" height="2" fill="#05070c"/>
<rect x="721" y="347" width="2" height="173.50" fill="#05070c"/>
</g>
<g shape-rendering="crispEdges"><rect x="207" y="503.4" width="464" height="17.1" fill="#14be14"/>
<rect x="208" y="503.4" width="1" height="17.1" fill="#2cc21c"/>
<rect x="209" y="503.4" width="1" height="17.1" fill="#2cc21c"/>
<rect x="211" y="486.2" width="1" height="34.3" fill="#18bc18"/>
<rect x="212" y="486.2" width="1" height="34.3" fill="#1cc018"/>
<rect x="213" y="486.2" width="1" height="34.3" fill="#26c21a"/>
<rect x="215" y="469.1" width="1" height="51.4" fill="#38c41a"/>
<rect x="216" y="503.4" width="1" height="17.1" fill="#2cc21c"/>
<rect x="217" y="486.2" width="1" height="34.3" fill="#14be14"/>
<rect x="218" y="486.2" width="1" height="34.3" fill="#18bc18"/>
<rect x="219" y="486.2" width="1" height="34.3" fill="#26c21a"/>
<rect x="220" y="486.2" width="1" height="34.3" fill="#14be14"/>
<rect x="221" y="486.2" width="1" height="34.3" fill="#18bc18"/>
<rect x="223" y="503.4" width="1" height="17.1" fill="#2cc21c"/>
<rect x="225" y="469.1" width="1" height="51.4" fill="#38c41a"/>
<rect x="226" y="503.4" width="1" height="17.1" fill="#2cc21c"/>
<rect x="227" y="486.2" width="1" height="34.3" fill="#18bc18"/>
<rect x="228" y="486.2" width="1" height="34.3" fill="#26c21a"/>
<rect x="229" y="486.2" width="1" height="34.3" fill="#18bc18"/>
<rect x="230" y="486.2" width="1" height="34.3" fill="#1cc018"/>
<rect x="233" y="417.6" width="1" height="102.9" fill="#4cc81e"/>
<rect x="235" y="486.2" width="1" height="34.3" fill="#14be14"/>
<rect x="241" y="486.2" width="1" height="34.3" fill="#18bc18"/>
<rect x="242" y="486.2" width="1" height="34.3" fill="#18bc18"/>
<rect x="243" y="469.1" width="1" height="51.4" fill="#38c41a"/>
<rect x="246" y="486.2" width="1" height="34.3" fill="#26c21a"/>
<rect x="247" y="486.2" width="1" height="34.3" fill="#18bc18"/>
<rect x="248" y="503.4" width="1" height="17.1" fill="#2cc21c"/>
<rect x="249" y="486.2" width="1" height="34.3" fill="#26c21a"/>
<rect x="250" y="486.2" width="1" height="34.3" fill="#14be14"/>
<rect x="251" y="486.2" width="1" height="34.3" fill="#1cc018"/>
<rect x="252" y="486.2" width="1" height="34.3" fill="#18bc18"/>
<rect x="254" y="486.2" width="1" height="34.3" fill="#18bc18"/>
<rect x="256" y="486.2" width="1" height="34.3" fill="#14be14"/>
<rect x="257" y="486.2" width="1" height="34.3" fill="#26c21a"/>
<rect x="258" y="486.2" width="1" height="34.3" fill="#14be14"/>
<rect x="259" y="486.2" width="1" height="34.3" fill="#26c21a"/>
<rect x="260" y="486.2" width="1" height="34.3" fill="#26c21a"/>
<rect x="262" y="486.2" width="1" height="34.3" fill="#1cc018"/>
<rect x="263" y="486.2" width="1" height="34.3" fill="#18bc18"/>
<rect x="264" y="486.2" width="1" height="34.3" fill="#14be14"/>
<rect x="265" y="486.2" width="1" height="34.3" fill="#26c21a"/>
<rect x="267" y="469.1" width="1" height="51.4" fill="#38c41a"/>
<rect x="268" y="486.2" width="1" height="34.3" fill="#14be14"/>
<rect x="269" y="486.2" width="1" height="34.3" fill="#14be14"/>
<rect x="270" y="486.2" width="1" height="34.3" fill="#26c21a"/>
<rect x="272" y="486.2" width="1" height="34.3" fill="#26c21a"/>
<rect x="273" y="486.2" width="1" height="34.3" fill="#26c21a"/>
<rect x="277" y="486.2" width="1" height="34.3" fill="#14be14"/>
<rect x="278" y="486.2" width="1" height="34.3" fill="#26c21a"/>
<rect x="279" y="503.4" width="1" height="17.1" fill="#2cc21c"/>
<rect x="280" y="503.4" width="1" height="17.1" fill="#2cc21c"/>
<rect x="283" y="486.2" width="1" height="34.3" fill="#14be14"/>
<rect x="285" y="486.2" width="1" height="34.3" fill="#26c21a"/>
<rect x="286" y="486.2" width="1" height="34.3" fill="#18bc18"/>
<rect x="289" y="503.4" width="1" height="17.1" fill="#2cc21c"/>
<rect x="291" y="486.2" width="1" height="34.3" fill="#14be14"/>
<rect x="292" y="503.4" width="1" height="17.1" fill="#2cc21c"/>
<rect x="293" y="469.1" width="1" height="51.4" fill="#38c41a"/>
<rect x="294" y="486.2" width="1" height="34.3" fill="#1cc018"/>
<rect x="295" y="469.1" width="1" height="51.4" fill="#38c41a"/>
<rect x="296" y="486.2" width="1" height="34.3" fill="#26c21a"/>
<rect x="297" y="486.2" width="1" height="34.3" fill="#26c21a"/>
<rect x="298" y="503.4" width="1" height="17.1" fill="#2cc21c"/>
<rect x="299" y="503.4" width="1" height="17.1" fill="#2cc21c"/>
<rect x="300" y="503.4" width="1" height="17.1" fill="#2cc21c"/>
<rect x="304" y="486.2" width="1" height="34.3" fill="#18bc18"/>
<rect x="305" y="486.2" width="1" height="34.3" fill="#14be14"/>
<rect x="306" y="486.2" width="1" height="34.3" fill="#18bc18"/>
<rect x="307" y="486.2" width="1" height="34.3" fill="#14be14"/>
<rect x="308" y="486.2" width="1" height="34.3" fill="#1cc018"/>
<rect x="309" y="486.2" width="1" height="34.3" fill="#26c21a"/>
<rect x="311" y="503.4" width="1" height="17.1" fill="#2cc21c"/>
<rect x="315" y="503.4" width="1" height="17.1" fill="#2cc21c"/>
<rect x="321" y="503.4" width="1" height="17.1" fill="#2cc21c"/>
<rect x="323" y="486.2" width="1" height="34.3" fill="#18bc18"/>
<rect x="324" y="486.2" width="1" height="34.3" fill="#1cc018"/>
<rect x="325" y="486.2" width="1" height="34.3" fill="#18bc18"/>
<rect x="330" y="486.2" width="1" height="34.3" fill="#14be14"/>
<rect x="332" y="486.2" width="1" height="34.3" fill="#26c21a"/>
<rect x="333" y="434.8" width="1" height="85.8" fill="#4cc81e"/>
<rect x="336" y="486.2" width="1" height="34.3" fill="#14be14"/>
<rect x="337" y="486.2" width="1" height="34.3" fill="#14be14"/>
<rect x="338" y="486.2" width="1" height="34.3" fill="#18bc18"/>
<rect x="339" y="486.2" width="1" height="34.3" fill="#26c21a"/>
<rect x="340" y="486.2" width="1" height="34.3" fill="#14be14"/>
<rect x="341" y="486.2" width="1" height="34.3" fill="#1cc018"/>
<rect x="342" y="503.4" width="1" height="17.1" fill="#2cc21c"/>
<rect x="343" y="486.2" width="1" height="34.3" fill="#26c21a"/>
<rect x="344" y="486.2" width="1" height="34.3" fill="#1cc018"/>
<rect x="346" y="503.4" width="1" height="17.1" fill="#2cc21c"/>
<rect x="349" y="503.4" width="1" height="17.1" fill="#2cc21c"/>
<rect x="353" y="469.1" width="1" height="51.4" fill="#38c41a"/>
<rect x="359" y="503.4" width="1" height="17.1" fill="#2cc21c"/>
<rect x="361" y="486.2" width="1" height="34.3" fill="#1cc018"/>
<rect x="363" y="486.2" width="1" height="34.3" fill="#26c21a"/>
<rect x="365" y="486.2" width="1" height="34.3" fill="#26c21a"/>
<rect x="366" y="486.2" width="1" height="34.3" fill="#1cc018"/>
<rect x="367" y="486.2" width="1" height="34.3" fill="#26c21a"/>
<rect x="369" y="486.2" width="1" height="34.3" fill="#18bc18"/>
<rect x="371" y="486.2" width="1" height="34.3" fill="#18bc18"/>
<rect x="372" y="486.2" width="1" height="34.3" fill="#26c21a"/>
<rect x="373" y="486.2" width="1" height="34.3" fill="#1cc018"/>
<rect x="374" y="486.2" width="1" height="34.3" fill="#18bc18"/>
<rect x="375" y="486.2" width="1" height="34.3" fill="#18bc18"/>
<rect x="376" y="486.2" width="1" height="34.3" fill="#26c21a"/>
<rect x="377" y="503.4" width="1" height="17.1" fill="#2cc21c"/>
<rect x="378" y="486.2" width="1" height="34.3" fill="#18bc18"/>
<rect x="379" y="486.2" width="1" height="34.3" fill="#1cc018"/>
<rect x="380" y="486.2" width="1" height="34.3" fill="#26c21a"/>
<rect x="382" y="486.2" width="1" height="34.3" fill="#18bc18"/>
<rect x="383" y="486.2" width="1" height="34.3" fill="#14be14"/>
<rect x="384" y="486.2" width="1" height="34.3" fill="#26c21a"/>
<rect x="385" y="486.2" width="1" height="34.3" fill="#14be14"/>
<rect x="386" y="486.2" width="1" height="34.3" fill="#26c21a"/>
<rect x="387" y="486.2" width="1" height="34.3" fill="#18bc18"/>
<rect x="390" y="486.2" width="1" height="34.3" fill="#14be14"/>
<rect x="391" y="486.2" width="1" height="34.3" fill="#1cc018"/>
<rect x="392" y="486.2" width="1" height="34.3" fill="#18bc18"/>
<rect x="393" y="486.2" width="1" height="34.3" fill="#18bc18"/>
<rect x="395" y="486.2" width="1" height="34.3" fill="#14be14"/>
<rect x="396" y="486.2" width="1" height="34.3" fill="#1cc018"/>
<rect x="397" y="486.2" width="1" height="34.3" fill="#1cc018"/>
<rect x="398" y="486.2" width="1" height="34.3" fill="#14be14"/>
<rect x="399" y="486.2" width="1" height="34.3" fill="#26c21a"/>
<rect x="400" y="486.2" width="1" height="34.3" fill="#1cc018"/>
<rect x="401" y="486.2" width="1" height="34.3" fill="#14be14"/>
<rect x="402" y="486.2" width="1" height="34.3" fill="#26c21a"/>
<rect x="403" y="486.2" width="1" height="34.3" fill="#1cc018"/>
<rect x="404" y="486.2" width="1" height="34.3" fill="#18bc18"/>
<rect x="405" y="486.2" width="1" height="34.3" fill="#26c21a"/>
<rect x="406" y="383.3" width="1" height="137.2" fill="#50c81c"/>
<rect x="407" y="383.3" width="1" height="137.2" fill="#50c81c"/>
<rect x="408" y="366.1" width="1" height="154.4" fill="#90d22c"/>
<rect x="409" y="349.0" width="1" height="171.5" fill="#90d22c"/>
<rect x="410" y="383.3" width="1" height="137.2" fill="#50c81c"/>
<rect x="412" y="486.2" width="1" height="34.3" fill="#18bc18"/>
<rect x="413" y="486.2" width="1" height="34.3" fill="#26c21a"/>
<rect x="414" y="486.2" width="1" height="34.3" fill="#26c21a"/>
<rect x="415" y="503.4" width="1" height="17.1" fill="#2cc21c"/>
<rect x="416" y="486.2" width="1" height="34.3" fill="#1cc018"/>
<rect x="417" y="486.2" width="1" height="34.3" fill="#1cc018"/>
<rect x="419" y="486.2" width="1" height="34.3" fill="#26c21a"/>
<rect x="420" y="486.2" width="1" height="34.3" fill="#14be14"/>
<rect x="421" y="486.2" width="1" height="34.3" fill="#1cc018"/>
<rect x="423" y="486.2" width="1" height="34.3" fill="#1cc018"/>
<rect x="425" y="486.2" width="1" height="34.3" fill="#26c21a"/>
<rect x="427" y="486.2" width="1" height="34.3" fill="#26c21a"/>
<rect x="428" y="486.2" width="1" height="34.3" fill="#14be14"/>
<rect x="436" y="486.2" width="1" height="34.3" fill="#14be14"/>
<rect x="437" y="503.4" width="1" height="17.1" fill="#2cc21c"/>
<rect x="438" y="486.2" width="1" height="34.3" fill="#26c21a"/>
<rect x="439" y="486.2" width="1" height="34.3" fill="#26c21a"/>
<rect x="441" y="486.2" width="1" height="34.3" fill="#1cc018"/>
<rect x="442" y="486.2" width="1" height="34.3" fill="#26c21a"/>
<rect x="444" y="486.2" width="1" height="34.3" fill="#26c21a"/>
<rect x="445" y="486.2" width="1" height="34.3" fill="#14be14"/>
<rect x="446" y="486.2" width="1" height="34.3" fill="#26c21a"/>
<rect x="447" y="486.2" width="1" height="34.3" fill="#26c21a"/>
<rect x="448" y="486.2" width="1" height="34.3" fill="#1cc018"/>
<rect x="450" y="486.2" width="1" height="34.3" fill="#1cc018"/>
<rect x="451" y="486.2" width="1" height="34.3" fill="#1cc018"/>
<rect x="454" y="486.2" width="1" height="34.3" fill="#1cc018"/>
<rect x="455" y="469.1" width="1" height="51.4" fill="#38c41a"/>
<rect x="458" y="486.2" width="1" height="34.3" fill="#26c21a"/>
<rect x="459" y="486.2" width="1" height="34.3" fill="#26c21a"/>
<rect x="460" y="486.2" width="1" height="34.3" fill="#14be14"/>
<rect x="461" y="486.2" width="1" height="34.3" fill="#18bc18"/>
<rect x="462" y="486.2" width="1" height="34.3" fill="#26c21a"/>
<rect x="470" y="486.2" width="1" height="34.3" fill="#26c21a"/>
<rect x="471" y="486.2" width="1" height="34.3" fill="#26c21a"/>
<rect x="472" y="486.2" width="1" height="34.3" fill="#1cc018"/>
<rect x="473" y="486.2" width="1" height="34.3" fill="#14be14"/>
<rect x="474" y="486.2" width="1" height="34.3" fill="#14be14"/>
<rect x="475" y="486.2" width="1" height="34.3" fill="#14be14"/>
<rect x="477" y="469.1" width="1" height="51.4" fill="#38c41a"/>
<rect x="478" y="503.4" width="1" height="17.1" fill="#2cc21c"/>
<rect x="479" y="469.1" width="1" height="51.4" fill="#38c41a"/>
<rect x="480" y="486.2" width="1" height="34.3" fill="#14be14"/>
<rect x="481" y="503.4" width="1" height="17.1" fill="#2cc21c"/>
<rect x="482" y="486.2" width="1" height="34.3" fill="#26c21a"/>
<rect x="483" y="486.2" width="1" height="34.3" fill="#26c21a"/>
<rect x="485" y="486.2" width="1" height="34.3" fill="#1cc018"/>
<rect x="486" y="486.2" width="1" height="34.3" fill="#14be14"/>
<rect x="487" y="486.2" width="1" height="34.3" fill="#14be14"/>
<rect x="488" y="486.2" width="1" height="34.3" fill="#1cc018"/>
<rect x="489" y="486.2" width="1" height="34.3" fill="#14be14"/>
<rect x="490" y="486.2" width="1" height="34.3" fill="#18bc18"/>
<rect x="491" y="486.2" width="1" height="34.3" fill="#1cc018"/>
<rect x="492" y="486.2" width="1" height="34.3" fill="#14be14"/>
<rect x="493" y="486.2" width="1" height="34.3" fill="#18bc18"/>
<rect x="494" y="486.2" width="1" height="34.3" fill="#1cc018"/>
<rect x="495" y="486.2" width="1" height="34.3" fill="#14be14"/>
<rect x="496" y="486.2" width="1" height="34.3" fill="#26c21a"/>
<rect x="497" y="486.2" width="1" height="34.3" fill="#18bc18"/>
<rect x="498" y="486.2" width="1" height="34.3" fill="#1cc018"/>
<rect x="500" y="486.2" width="1" height="34.3" fill="#14be14"/>
<rect x="501" y="486.2" width="1" height="34.3" fill="#18bc18"/>
<rect x="502" y="486.2" width="1" height="34.3" fill="#1cc018"/>
<rect x="504" y="486.2" width="1" height="34.3" fill="#14be14"/>
<rect x="505" y="469.1" width="1" height="51.4" fill="#38c41a"/>
<rect x="506" y="486.2" width="1" height="34.3" fill="#18bc18"/>
<rect x="507" y="486.2" width="1" height="34.3" fill="#14be14"/>
<rect x="511" y="503.4" width="1" height="17.1" fill="#2cc21c"/>
<rect x="517" y="486.2" width="1" height="34.3" fill="#1cc018"/>
<rect x="518" y="486.2" width="1" height="34.3" fill="#18bc18"/>
<rect x="519" y="486.2" width="1" height="34.3" fill="#14be14"/>
<rect x="520" y="486.2" width="1" height="34.3" fill="#18bc18"/>
<rect x="522" y="486.2" width="1" height="34.3" fill="#26c21a"/>
<rect x="523" y="486.2" width="1" height="34.3" fill="#1cc018"/>
<rect x="524" y="486.2" width="1" height="34.3" fill="#14be14"/>
<rect x="526" y="486.2" width="1" height="34.3" fill="#1cc018"/>
<rect x="527" y="486.2" width="1" height="34.3" fill="#14be14"/>
<rect x="528" y="486.2" width="1" height="34.3" fill="#14be14"/>
<rect x="529" y="486.2" width="1" height="34.3" fill="#14be14"/>
<rect x="530" y="486.2" width="1" height="34.3" fill="#26c21a"/>
<rect x="532" y="486.2" width="1" height="34.3" fill="#14be14"/>
<rect x="534" y="486.2" width="1" height="34.3" fill="#1cc018"/>
<rect x="535" y="486.2" width="1" height="34.3" fill="#1cc018"/>
<rect x="537" y="486.2" width="1" height="34.3" fill="#14be14"/>
<rect x="538" y="486.2" width="1" height="34.3" fill="#14be14"/>
<rect x="539" y="486.2" width="1" height="34.3" fill="#26c21a"/>
<rect x="540" y="486.2" width="1" height="34.3" fill="#14be14"/>
<rect x="541" y="486.2" width="1" height="34.3" fill="#1cc018"/>
<rect x="542" y="486.2" width="1" height="34.3" fill="#18bc18"/>
<rect x="543" y="486.2" width="1" height="34.3" fill="#1cc018"/>
<rect x="544" y="486.2" width="1" height="34.3" fill="#18bc18"/>
<rect x="546" y="486.2" width="1" height="34.3" fill="#1cc018"/>
<rect x="547" y="486.2" width="1" height="34.3" fill="#26c21a"/>
<rect x="548" y="486.2" width="1" height="34.3" fill="#18bc18"/>
<rect x="549" y="486.2" width="1" height="34.3" fill="#14be14"/>
<rect x="550" y="486.2" width="1" height="34.3" fill="#1cc018"/>
<rect x="551" y="486.2" width="1" height="34.3" fill="#26c21a"/>
<rect x="552" y="503.4" width="1" height="17.1" fill="#2cc21c"/>
<rect x="553" y="486.2" width="1" height="34.3" fill="#26c21a"/>
<rect x="554" y="486.2" width="1" height="34.3" fill="#26c21a"/>
<rect x="555" y="486.2" width="1" height="34.3" fill="#26c21a"/>
<rect x="556" y="486.2" width="1" height="34.3" fill="#18bc18"/>
<rect x="558" y="486.2" width="1" height="34.3" fill="#18bc18"/>
<rect x="559" y="486.2" width="1" height="34.3" fill="#1cc018"/>
<rect x="560" y="486.2" width="1" height="34.3" fill="#1cc018"/>
<rect x="561" y="503.4" width="1" height="17.1" fill="#2cc21c"/>
<rect x="562" y="486.2" width="1" height="34.3" fill="#26c21a"/>
<rect x="566" y="503.4" width="1" height="17.1" fill="#2cc21c"/>
<rect x="568" y="486.2" width="1" height="34.3" fill="#26c21a"/>
<rect x="569" y="486.2" width="1" height="34.3" fill="#26c21a"/>
<rect x="570" y="486.2" width="1" height="34.3" fill="#14be14"/>
<rect x="571" y="486.2" width="1" height="34.3" fill="#1cc018"/>
<rect x="572" y="486.2" width="1" height="34.3" fill="#26c21a"/>
<rect x="575" y="486.2" width="1" height="34.3" fill="#26c21a"/>
<rect x="576" y="486.2" width="1" height="34.3" fill="#1cc018"/>
<rect x="577" y="486.2" width="1" height="34.3" fill="#14be14"/>
<rect x="578" y="486.2" width="1" height="34.3" fill="#1cc018"/>
<rect x="579" y="486.2" width="1" height="34.3" fill="#14be14"/>
<rect x="580" y="486.2" width="1" height="34.3" fill="#14be14"/>
<rect x="581" y="486.2" width="1" height="34.3" fill="#1cc018"/>
<rect x="582" y="486.2" width="1" height="34.3" fill="#18bc18"/>
<rect x="586" y="486.2" width="1" height="34.3" fill="#26c21a"/>
<rect x="587" y="486.2" width="1" height="34.3" fill="#26c21a"/>
<rect x="588" y="486.2" width="1" height="34.3" fill="#14be14"/>
<rect x="589" y="486.2" width="1" height="34.3" fill="#14be14"/>
<rect x="591" y="486.2" width="1" height="34.3" fill="#18bc18"/>
<rect x="592" y="486.2" width="1" height="34.3" fill="#1cc018"/>
<rect x="593" y="486.2" width="1" height="34.3" fill="#18bc18"/>
<rect x="594" y="486.2" width="1" height="34.3" fill="#1cc018"/>
<rect x="595" y="486.2" width="1" height="34.3" fill="#26c21a"/>
<rect x="597" y="486.2" width="1" height="34.3" fill="#1cc018"/>
<rect x="598" y="486.2" width="1" height="34.3" fill="#18bc18"/>
<rect x="599" y="486.2" width="1" height="34.3" fill="#26c21a"/>
<rect x="600" y="486.2" width="1" height="34.3" fill="#14be14"/>
<rect x="602" y="486.2" width="1" height="34.3" fill="#14be14"/>
<rect x="603" y="486.2" width="1" height="34.3" fill="#14be14"/>
<rect x="606" y="503.4" width="1" height="17.1" fill="#2cc21c"/>
<rect x="607" y="486.2" width="1" height="34.3" fill="#1cc018"/>
<rect x="608" y="503.4" width="1" height="17.1" fill="#2cc21c"/>
<rect x="609" y="486.2" width="1" height="34.3" fill="#1cc018"/>
<rect x="610" y="486.2" width="1" height="34.3" fill="#1cc018"/>
<rect x="611" y="486.2" width="1" height="34.3" fill="#18bc18"/>
<rect x="612" y="486.2" width="1" height="34.3" fill="#1cc018"/>
<rect x="613" y="486.2" width="1" height="34.3" fill="#26c21a"/>
<rect x="616" y="503.4" width="1" height="17.1" fill="#2cc21c"/>
<rect x="617" y="486.2" width="1" height="34.3" fill="#26c21a"/>
<rect x="618" y="486.2" width="1" height="34.3" fill="#14be14"/>
<rect x="619" y="486.2" width="1" height="34.3" fill="#1cc018"/>
<rect x="620" y="486.2" width="1" height="34.3" fill="#1cc018"/>
<rect x="621" y="469.1" width="1" height="51.4" fill="#38c41a"/>
<rect x="622" y="469.1" width="1" height="51.4" fill="#38c41a"/>
<rect x="623" y="469.1" width="1" height="51.4" fill="#38c41a"/>
<rect x="624" y="486.2" width="1" height="34.3" fill="#1cc018"/>
<rect x="625" y="486.2" width="1" height="34.3" fill="#1cc018"/>
<rect x="626" y="486.2" width="1" height="34.3" fill="#18bc18"/>
<rect x="627" y="486.2" width="1" height="34.3" fill="#26c21a"/>
<rect x="628" y="486.2" width="1" height="34.3" fill="#26c21a"/>
<rect x="629" y="486.2" width="1" height="34.3" fill="#14be14"/>
<rect x="630" y="486.2" width="1" height="34.3" fill="#26c21a"/>
<rect x="631" y="486.2" width="1" height="34.3" fill="#1cc018"/>
<rect x="632" y="486.2" width="1" height="34.3" fill="#14be14"/>
<rect x="633" y="469.1" width="1" height="51.4" fill="#38c41a"/>
<rect x="637" y="503.4" width="1" height="17.1" fill="#2cc21c"/>
<rect x="638" y="486.2" width="1" height="34.3" fill="#26c21a"/>
<rect x="639" y="486.2" width="1" height="34.3" fill="#1cc018"/>
<rect x="640" y="486.2" width="1" height="34.3" fill="#14be14"/>
<rect x="641" y="486.2" width="1" height="34.3" fill="#26c21a"/>
<rect x="642" y="486.2" width="1" height="34.3" fill="#18bc18"/>
<rect x="643" y="486.2" width="1" height="34.3" fill="#26c21a"/>
<rect x="644" y="486.2" width="1" height="34.3" fill="#14be14"/>
<rect x="645" y="486.2" width="1" height="34.3" fill="#14be14"/>
<rect x="646" y="486.2" width="1" height="34.3" fill="#1cc018"/>
<rect x="647" y="503.4" width="1" height="17.1" fill="#2cc21c"/>
<rect x="648" y="486.2" width="1" height="34.3" fill="#26c21a"/>
<rect x="649" y="486.2" width="1" height="34.3" fill="#1cc018"/>
<rect x="650" y="486.2" width="1" height="34.3" fill="#1cc018"/>
<rect x="651" y="486.2" width="1" height="34.3" fill="#26c21a"/>
<rect x="652" y="486.2" width="1" height="34.3" fill="#2cc616"/>
<rect x="653" y="469.1" width="1" height="51.4" fill="#4ccc1e"/>
<rect x="654" y="469.1" width="1" height="51.4" fill="#4ccc1e"/>
<rect x="655" y="451.9" width="1" height="68.6" fill="#2cc616"/>
<rect x="656" y="469.1" width="1" height="51.4" fill="#4ccc1e"/>
<rect x="657" y="451.9" width="1" height="68.6" fill="#4ccc1e"/>
<rect x="658" y="451.9" width="1" height="68.6" fill="#22c414"/>
<rect x="659" y="451.9" width="1" height="68.6" fill="#3cca1a"/>
<rect x="660" y="434.8" width="1" height="85.8" fill="#3cca1a"/>
<rect x="661" y="451.9" width="1" height="68.6" fill="#4ccc1e"/>
<rect x="662" y="434.8" width="1" height="85.8" fill="#22c414"/>
<rect x="663" y="434.8" width="1" height="85.8" fill="#4ccc1e"/>
<rect x="664" y="417.6" width="1" height="102.9" fill="#4ccc1e"/>
<rect x="665" y="434.8" width="1" height="85.8" fill="#22c414"/>
<rect x="666" y="434.8" width="1" height="85.8" fill="#2cc616"/>
<rect x="667" y="417.6" width="1" height="102.9" fill="#3cca1a"/>
<rect x="668" y="417.6" width="1" height="102.9" fill="#22c414"/>
<rect x="669" y="400.4" width="1" height="120.1" fill="#58cc20"/>
<rect x="670" y="383.3" width="1" height="137.2" fill="#58cc20"/></g>
<rect x="670" y="349.0" width="1" height="41.2" fill="#62c4ee" shape-rendering="crispEdges"/>
<text x="201.3" y="285.8" text-anchor="end" textLength="17.0" lengthAdjust="spacingAndGlyphs">100</text>
<rect x="201.3" y="281.7" width="4" height="1" fill="#000"/>
<text x="201.3" y="251.5" text-anchor="end" textLength="17.0" lengthAdjust="spacingAndGlyphs">200</text>
<rect x="201.3" y="247.4" width="4" height="1" fill="#000"/>
<text x="201.3" y="217.2" text-anchor="end" textLength="17.0" lengthAdjust="spacingAndGlyphs">300</text>
<rect x="201.3" y="213.1" width="4" height="1" fill="#000"/>
<text x="201.3" y="182.9" text-anchor="end" textLength="17.0" lengthAdjust="spacingAndGlyphs">400</text>
<rect x="201.3" y="178.8" width="4" height="1" fill="#000"/>
<text x="201.3" y="148.6" text-anchor="end" textLength="17.0" lengthAdjust="spacingAndGlyphs">500</text>
<rect x="201.3" y="144.5" width="4" height="1" fill="#000"/>
<rect x="723" y="301.7" width="2.6" height="1" fill="#000"/>
<text x="726.0" y="306.2" text-anchor="start" textLength="15.2" lengthAdjust="spacingAndGlyphs">1 X</text>
<rect x="723" y="287.4" width="2.6" height="1" fill="#000"/>
<text x="726.0" y="291.9" text-anchor="start" textLength="15.2" lengthAdjust="spacingAndGlyphs">2 X</text>
<rect x="723" y="273.1" width="2.6" height="1" fill="#000"/>
<text x="726.0" y="277.5" text-anchor="start" textLength="15.2" lengthAdjust="spacingAndGlyphs">3 X</text>
<rect x="723" y="258.8" width="2.6" height="1" fill="#000"/>
<text x="726.0" y="263.1" text-anchor="start" textLength="15.2" lengthAdjust="spacingAndGlyphs">4 X</text>
<rect x="723" y="244.5" width="2.6" height="1" fill="#000"/>
<text x="726.0" y="248.8" text-anchor="start" textLength="15.2" lengthAdjust="spacingAndGlyphs">5 X</text>
<rect x="723" y="230.2" width="2.6" height="1" fill="#000"/>
<text x="726.0" y="234.4" text-anchor="start" textLength="15.2" lengthAdjust="spacingAndGlyphs">6 X</text>
<rect x="723" y="216.0" width="2.6" height="1" fill="#000"/>
<text x="726.0" y="220.1" text-anchor="start" textLength="15.2" lengthAdjust="spacingAndGlyphs">7 X</text>
<rect x="723" y="201.7" width="2.6" height="1" fill="#000"/>
<text x="726.0" y="205.7" text-anchor="start" textLength="15.2" lengthAdjust="spacingAndGlyphs">8 X</text>
<rect x="723" y="187.4" width="2.6" height="1" fill="#000"/>
<text x="726.0" y="191.4" text-anchor="start" textLength="15.2" lengthAdjust="spacingAndGlyphs">9 X</text>
<rect x="723" y="173.1" width="2.6" height="1" fill="#000"/>
<text x="726.0" y="177.0" text-anchor="start" textLength="21.6" lengthAdjust="spacingAndGlyphs">10 X</text>
<rect x="723" y="158.8" width="2.6" height="1" fill="#000"/>
<text x="726.0" y="162.7" text-anchor="start" textLength="21.6" lengthAdjust="spacingAndGlyphs">11 X</text>
<rect x="723" y="144.5" width="2.6" height="1" fill="#000"/>
<text x="726.0" y="148.3" text-anchor="start" textLength="21.6" lengthAdjust="spacingAndGlyphs">12 X</text>
<text x="198.2" y="327.0" text-anchor="start" textLength="13.7" lengthAdjust="spacingAndGlyphs">0.0</text>
<text x="198.2" y="531.5" text-anchor="start" textLength="13.7" lengthAdjust="spacingAndGlyphs">0.0</text>
<text x="249.7" y="327.0" text-anchor="start" textLength="13.7" lengthAdjust="spacingAndGlyphs">2.5</text>
<text x="249.7" y="531.5" text-anchor="start" textLength="13.7" lengthAdjust="spacingAndGlyphs">2.5</text>
<text x="301.1" y="327.0" text-anchor="start" textLength="13.7" lengthAdjust="spacingAndGlyphs">5.0</text>
<text x="301.1" y="531.5" text-anchor="start" textLength="13.7" lengthAdjust="spacingAndGlyphs">5.0</text>
<text x="352.6" y="327.0" text-anchor="start" textLength="13.7" lengthAdjust="spacingAndGlyphs">7.5</text>
<text x="352.6" y="531.5" text-anchor="start" textLength="13.7" lengthAdjust="spacingAndGlyphs">7.5</text>
<text x="400.9" y="327.0" text-anchor="start" textLength="20.3" lengthAdjust="spacingAndGlyphs">10.0</text>
<text x="400.9" y="531.5" text-anchor="start" textLength="20.3" lengthAdjust="spacingAndGlyphs">10.0</text>
<text x="452.4" y="327.0" text-anchor="start" textLength="20.3" lengthAdjust="spacingAndGlyphs">12.5</text>
<text x="452.4" y="531.5" text-anchor="start" textLength="20.3" lengthAdjust="spacingAndGlyphs">12.5</text>
<text x="503.9" y="327.0" text-anchor="start" textLength="20.3" lengthAdjust="spacingAndGlyphs">15.0</text>
<text x="503.9" y="531.5" text-anchor="start" textLength="20.3" lengthAdjust="spacingAndGlyphs">15.0</text>
<text x="555.4" y="327.0" text-anchor="start" textLength="20.3" lengthAdjust="spacingAndGlyphs">17.5</text>
<text x="555.4" y="531.5" text-anchor="start" textLength="20.3" lengthAdjust="spacingAndGlyphs">17.5</text>
<text x="606.9" y="327.0" text-anchor="start" textLength="20.3" lengthAdjust="spacingAndGlyphs">20.0</text>
<text x="606.9" y="531.5" text-anchor="start" textLength="20.3" lengthAdjust="spacingAndGlyphs">20.0</text>
<text x="658.4" y="327.0" text-anchor="start" textLength="20.3" lengthAdjust="spacingAndGlyphs">22.5</text>
<text x="658.4" y="531.5" text-anchor="start" textLength="20.3" lengthAdjust="spacingAndGlyphs">22.5</text>
<text x="701.3" y="327.0" text-anchor="start" textLength="38" lengthAdjust="spacingAndGlyphs">25.0 GB</text>
<text x="701.3" y="531.5" text-anchor="start" textLength="38" lengthAdjust="spacingAndGlyphs">25.0 GB</text>
<text x="201.3" y="507.0" text-anchor="end">1</text>
<rect x="201.3" y="502.9" width="4" height="1" fill="#000"/>
<text x="201.3" y="489.8" text-anchor="end">2</text>
<rect x="201.3" y="485.7" width="4" height="1" fill="#000"/>
<text x="201.3" y="472.7" text-anchor="end">3</text>
<rect x="201.3" y="468.6" width="4" height="1" fill="#000"/>
<text x="201.3" y="455.5" text-anchor="end">4</text>
<rect x="201.3" y="451.4" width="4" height="1" fill="#000"/>
<text x="201.3" y="438.4" text-anchor="end">5</text>
<rect x="201.3" y="434.2" width="4" height="1" fill="#000"/>
<text x="201.3" y="421.2" text-anchor="end">6</text>
<rect x="201.3" y="417.1" width="4" height="1" fill="#000"/>
<text x="201.3" y="404.1" text-anchor="end">7</text>
<rect x="201.3" y="399.9" width="4" height="1" fill="#000"/>
<text x="201.3" y="386.9" text-anchor="end">8</text>
<rect x="201.3" y="382.8" width="4" height="1" fill="#000"/>
<text x="201.3" y="369.8" text-anchor="end">9</text>
<rect x="201.3" y="365.6" width="4" height="1" fill="#000"/>
<text x="201.3" y="352.6" text-anchor="end" textLength="11.6" lengthAdjust="spacingAndGlyphs">10</text>
<rect x="201.3" y="348.5" width="4" height="1" fill="#000"/>
<text x="726.0" y="489.5" text-anchor="start" textLength="14.5" lengthAdjust="spacingAndGlyphs">2%</text>
<text x="726.0" y="455.2" text-anchor="start" textLength="14.5" lengthAdjust="spacingAndGlyphs">4%</text>
<text x="726.0" y="420.9" text-anchor="start" textLength="14.5" lengthAdjust="spacingAndGlyphs">6%</text>
<text x="726.0" y="386.6" text-anchor="start" textLength="14.5" lengthAdjust="spacingAndGlyphs">8%</text>
<text x="726.0" y="352.3" text-anchor="start" textLength="20" lengthAdjust="spacingAndGlyphs">10%</text>
</svg>
<div id="chk" class="abs"><svg width="11" height="11" viewBox="0 0 11 11" style="position:absolute;left:0;top:0"><path d="M2.2 5 L4.4 8.4 L8.8 1.8" fill="none" stroke="#2a3c9c" stroke-width="1.8"/></svg></div>
<div class="combo" style="left:661px;top:544px;width:88px;height:25px"><div class="arr" style="left:74px;top:11px"></div></div>
<div class="btn" style="left:662px;top:592px;width:86px;height:28px"></div>

<!-- status bar -->
<div id="status" class="abs"></div>
<div id="stline" class="abs"></div>
<div class="abs" style="left:8px;top:641px;width:164px;height:1px;background:#8a8a8a"></div>
<div class="sdiv" style="left:148px"></div>
<div class="sdiv" style="left:457px"></div>
<div class="sdiv" style="left:515px"></div>
<div class="sdiv" style="left:638px"></div>
<div id="prog" class="abs"></div>
<svg class="abs" style="left:746px;top:647px" width="12" height="12" viewBox="0 0 12 12" fill="#b0b0b0"><rect x="8" y="2" width="2" height="2"/><rect x="5" y="5" width="2" height="2"/><rect x="8" y="5" width="2" height="2"/><rect x="2" y="8" width="2" height="2"/><rect x="5" y="8" width="2" height="2"/><rect x="8" y="8" width="2" height="2"/></svg>
<div class="abs" style="left:0;top:0;width:767px;height:668px;will-change:transform">
<div class="t " style="top:230.5px;font-size:12px;line-height:16px;letter-spacing:-0.150px;left:37.5px;"><span id="nav0">転送率</span></div>
<div class="t " style="top:258.5px;font-size:12px;line-height:16px;left:37.5px;"><span id="nav1"><span class="kw" style="width:26.50px"><span style="transform:scaleX(0.7360)">テスト</span></span> <span class="kw" style="width:44.16px"><span style="transform:scaleX(0.7360)">ディスクの</span></span>作成</span></div>
<div class="t " style="top:286.5px;font-size:12px;line-height:16px;left:37.5px;"><span id="nav2"><span class="kw" style="width:26.50px"><span style="transform:scaleX(0.7360)">テスト</span></span> <span class="kw" style="width:44.16px"><span style="transform:scaleX(0.7360)">ディスクの</span></span>検証</span></div>
<div class="t " style="top:314.5px;font-size:12px;line-height:16px;left:37.5px;"><span id="nav3"><span class="kw" style="width:34.70px"><span style="transform:scaleX(0.7229)">ドライブ</span></span>情報</span></div>
<div class="t " style="top:342.5px;font-size:12px;line-height:16px;left:37.5px;"><span id="nav4"><span class="kw" style="width:33.60px"><span style="transform:scaleX(0.7000)">ディスク</span></span>情報</span></div>
<div class="t white" style="top:370.5px;font-size:12px;line-height:16px;left:37.5px;"><span id="nav5"><span class="kw" style="width:42.60px"><span style="transform:scaleX(0.7100)">ディスクの</span></span>品質</span></div>
<div class="t " style="top:398.5px;font-size:12px;line-height:16px;letter-spacing:-0.319px;left:37.5px;"><span id="nav6">CD Bler</span></div>
<div class="t " style="top:426.5px;font-size:12px;line-height:16px;letter-spacing:0.141px;left:37.5px;"><span id="nav7">FE / TE</span></div>
<div class="t " style="top:454.5px;font-size:12px;line-height:16px;left:37.5px;"><span id="nav8">追加<span class="kw" style="width:24.70px"><span style="transform:scaleX(0.6861)">テスト</span></span></span></div>
<div class="t title" style="top:5.5px;font-size:12px;line-height:16px;letter-spacing:-0.321px;left:30.0px;"><span id="title">Opti Drive Control 1.50</span></div>
<div class="t " style="top:28.0px;font-size:13px;line-height:17px;left:16.0px;"><span id="m1"><span class="kw" style="width:47.39px"><span style="transform:scaleX(0.9114)">ファイル</span></span>(F)</span></div>
<div class="t " style="top:28.0px;font-size:13px;line-height:17px;left:94.0px;"><span id="m2"><span class="kw" style="width:34.16px"><span style="transform:scaleX(0.8758)">テスト</span></span>開始(S)</span></div>
<div class="t " style="top:28.0px;font-size:13px;line-height:17px;left:186.5px;"><span id="m3"><span class="kw" style="width:23.16px"><span style="transform:scaleX(0.8906)">その</span></span>他(X)</span></div>
<div class="t " style="top:28.0px;font-size:13px;line-height:17px;left:254.0px;"><span id="m4"><span class="kw" style="width:36.45px"><span style="transform:scaleX(0.9347)">ヘルプ</span></span>(H)</span></div>
<div class="t b" style="top:66.8px;font-size:12px;line-height:16px;left:17.2px;"><span id="drv"><span class="kw" style="width:44.00px"><span style="transform:scaleX(0.9167)">ドライブ</span></span></span></div>
<div class="t " style="top:69.0px;font-size:11px;line-height:15px;letter-spacing:0.635px;left:101.5px;white-space:pre;"><span id="drvtxt">(E:)   ATAPI iHBS212   2 5L09</span></div>
<div class="t b" style="top:67.0px;font-size:12px;line-height:16px;letter-spacing:-0.500px;left:422.5px;"><span id="spd">速度</span></div>
<div class="t " style="top:68.0px;font-size:11px;line-height:15px;letter-spacing:0.628px;left:479.5px;"><span id="spdtxt">8.0 X</span></div>
<div class="t b" style="top:110.5px;font-size:12px;line-height:16px;left:16.2px;"><span id="disk"><span class="kw" style="width:44.00px"><span style="transform:scaleX(0.9167)">ディスク</span></span></span></div>
<div class="t " style="top:137.9px;font-size:11px;line-height:15px;letter-spacing:0.000px;left:17.0px;"><span id="il0">種類</span></div>
<div class="t v" style="top:137.9px;font-size:11px;line-height:15px;letter-spacing:0.036px;right:601.2px;margin-right:-0.036px;"><span id="iv0">BD-R</span></div>
<div class="t " style="top:159.7px;font-size:11px;line-height:15px;letter-spacing:-0.086px;left:17.0px;"><span id="il1">MID</span></div>
<div class="t v" style="top:159.7px;font-size:11px;line-height:15px;letter-spacing:0.440px;right:601.2px;margin-right:-0.440px;"><span id="iv1">SONYNN3 (002)</span></div>
<div class="t " style="top:180.7px;font-size:11px;line-height:15px;left:17.0px;"><span id="il2">長<span class="kw" style="width:10.00px"><span style="transform:scaleX(0.9091)">さ</span></span></span></div>
<div class="t v" style="top:180.7px;font-size:11px;line-height:15px;letter-spacing:0.545px;right:601.2px;margin-right:-0.545px;"><span id="iv2">22.56 GB</span></div>
<div class="t " style="top:201.4px;font-size:11px;line-height:15px;letter-spacing:0.000px;left:17.0px;"><span id="il3">内容</span></div>
<div class="t v" style="top:201.4px;font-size:11px;line-height:15px;right:601.2px;margin-right:0.000px;"><span id="iv3"><span class="kw" style="width:32.30px"><span style="transform:scaleX(0.9788)">データ</span></span></span></div>
<div class="t " style="top:618.3px;font-size:12px;line-height:16px;left:-59.8px;width:300px;text-align:center;text-shadow:0 0 1px rgba(0,0,0,.35);"><span id="statebtn">状態<span class="kw" style="width:56.24px"><span style="transform:scaleX(0.9373)">ウィンドウ</span></span> &gt;&gt;</span></div>
<div class="t " style="top:643.5px;font-size:12px;line-height:16px;left:9.5px;"><span id="st1"><span class="kw" style="width:24.50px"><span style="transform:scaleX(0.6806)">テスト</span></span>完了</span></div>
<div class="t " style="top:643.0px;font-size:12px;line-height:16px;width:33.6px;left:460.5px;"><span id="st2"><span style="display:inline-block;transform:scaleX(0.8255);transform-origin:0 50%;white-space:pre">100.0%</span></span></div>
<div class="t " style="top:643.0px;font-size:12px;line-height:16px;width:26.3px;left:609.7px;"><span id="st3"><span style="display:inline-block;transform:scaleX(0.8758);transform-origin:0 50%;white-space:pre">44:38</span></span></div>
<div class="t white" style="top:103.7px;font-size:17px;line-height:21px;left:206.4px;"><span id="hdr"><span class="kw" style="width:62.60px"><span style="transform:scaleX(0.7365)">ディスクの</span></span>品質</span></div>
<div class="t " style="top:129.0px;font-size:12px;line-height:16px;width:18.4px;left:216.6px;"><span id="lg1"><span style="display:inline-block;transform:scaleX(0.7662);transform-origin:0 50%;white-space:pre">LDC</span></span></div>
<div class="t " style="top:129.0px;font-size:12px;line-height:16px;left:247.3px;"><span id="lg2">読<span class="kw" style="width:9.45px"><span style="transform:scaleX(0.7875)">み</span></span>取<span class="kw" style="width:9.45px"><span style="transform:scaleX(0.7875)">り</span></span>速度</span></div>
<div class="t " style="top:129.0px;font-size:12px;line-height:16px;left:326.8px;"><span id="lg3">書<span class="kw" style="width:9.70px"><span style="transform:scaleX(0.8083)">き</span></span>込<span class="kw" style="width:9.70px"><span style="transform:scaleX(0.8083)">み</span></span>速度</span></div>
<div class="t " style="top:129.0px;font-size:12px;line-height:16px;width:235.4px;left:486.3px;white-space:pre;"><span id="lg4"><span style="display:inline-block;transform:scaleX(0.8666);transform-origin:0 50%;white-space:pre">ATAPI iHBS212   2 5L09 で 6Xに書き込まれました</span></span></div>
<div class="t " style="top:333.0px;font-size:12px;line-height:16px;width:15.0px;left:216.4px;"><span id="lg5"><span style="display:inline-block;transform:scaleX(0.7754);transform-origin:0 50%;white-space:pre">BIS</span></span></div>
<div class="t " style="top:333.0px;font-size:12px;line-height:16px;left:243.5px;"><span id="lg6"><span class="kw" style="width:25.10px"><span style="transform:scaleX(0.6972)">ジッタ</span></span></span></div>
<div class="t " style="top:542.5px;font-size:11px;line-height:15px;letter-spacing:-0.658px;right:458.7px;margin-right:0.658px;"><span id="sh1">LDC</span></div>
<div class="t " style="top:542.5px;font-size:11px;line-height:15px;letter-spacing:-0.267px;right:396.2px;margin-right:0.267px;"><span id="sh2">BIS</span></div>
<div class="t " style="top:563.9px;font-size:11px;line-height:15px;letter-spacing:-0.500px;left:178.6px;"><span id="sl0">平均</span></div>
<div class="t v" style="top:563.9px;font-size:11px;line-height:15px;letter-spacing:1.093px;right:459.4px;margin-right:-1.093px;"><span id="sa0">3.57</span></div>
<div class="t v" style="top:563.9px;font-size:11px;line-height:15px;letter-spacing:1.193px;right:397.0px;margin-right:-1.193px;"><span id="sb0">0.06</span></div>
<div class="t " style="top:584.9px;font-size:11px;line-height:15px;letter-spacing:-0.500px;left:178.6px;"><span id="sl1">最大</span></div>
<div class="t v" style="top:584.9px;font-size:11px;line-height:15px;letter-spacing:0.570px;right:459.4px;margin-right:-0.570px;"><span id="sa1">533</span></div>
<div class="t v" style="top:584.9px;font-size:11px;line-height:15px;letter-spacing:0.378px;right:397.0px;margin-right:-0.378px;"><span id="sb1">11</span></div>
<div class="t " style="top:605.8px;font-size:11px;line-height:15px;letter-spacing:-0.500px;left:178.6px;"><span id="sl2">合計</span></div>
<div class="t v" style="top:605.8px;font-size:11px;line-height:15px;letter-spacing:0.745px;right:459.4px;margin-right:-0.745px;"><span id="sa2">1318023</span></div>
<div class="t v" style="top:605.8px;font-size:11px;line-height:15px;letter-spacing:0.902px;right:397.0px;margin-right:-0.902px;"><span id="sb2">23753</span></div>
<div class="t " style="top:544.2px;font-size:12px;line-height:16px;left:472.3px;"><span id="jit"><span class="kw" style="width:32.40px"><span style="transform:scaleX(0.9000)">ジッタ</span></span></span></div>
<div class="t " style="top:548.9px;font-size:11px;line-height:15px;letter-spacing:0.200px;left:527.4px;"><span id="r1">速度</span></div>
<div class="t v" style="top:548.9px;font-size:11px;line-height:15px;letter-spacing:0.878px;left:596.5px;"><span id="r1v">2.01 X</span></div>
<div class="t " style="top:584.7px;font-size:11px;line-height:15px;letter-spacing:0.200px;left:527.4px;"><span id="r2">位置</span></div>
<div class="t v" style="top:584.7px;font-size:11px;line-height:15px;letter-spacing:0.877px;left:596.5px;"><span id="r2v">23093</span></div>
<div class="t " style="top:606.5px;font-size:11px;line-height:15px;left:527.4px;"><span id="r3"><span class="kw" style="width:43.90px"><span style="transform:scaleX(0.9977)">サンプル</span></span></span></div>
<div class="t v" style="top:606.5px;font-size:11px;line-height:15px;letter-spacing:0.836px;left:596.5px;"><span id="r3v">369461</span></div>
<div class="t " style="top:548.9px;font-size:11px;line-height:15px;letter-spacing:0.928px;left:665.1px;"><span id="c2txt">2.0 X</span></div>
<div class="t " style="top:598.0px;font-size:11px;line-height:15px;letter-spacing:-0.200px;left:555.3px;width:300px;text-align:center;"><span id="startbtn">開始</span></div>
</div>
</body></html>
